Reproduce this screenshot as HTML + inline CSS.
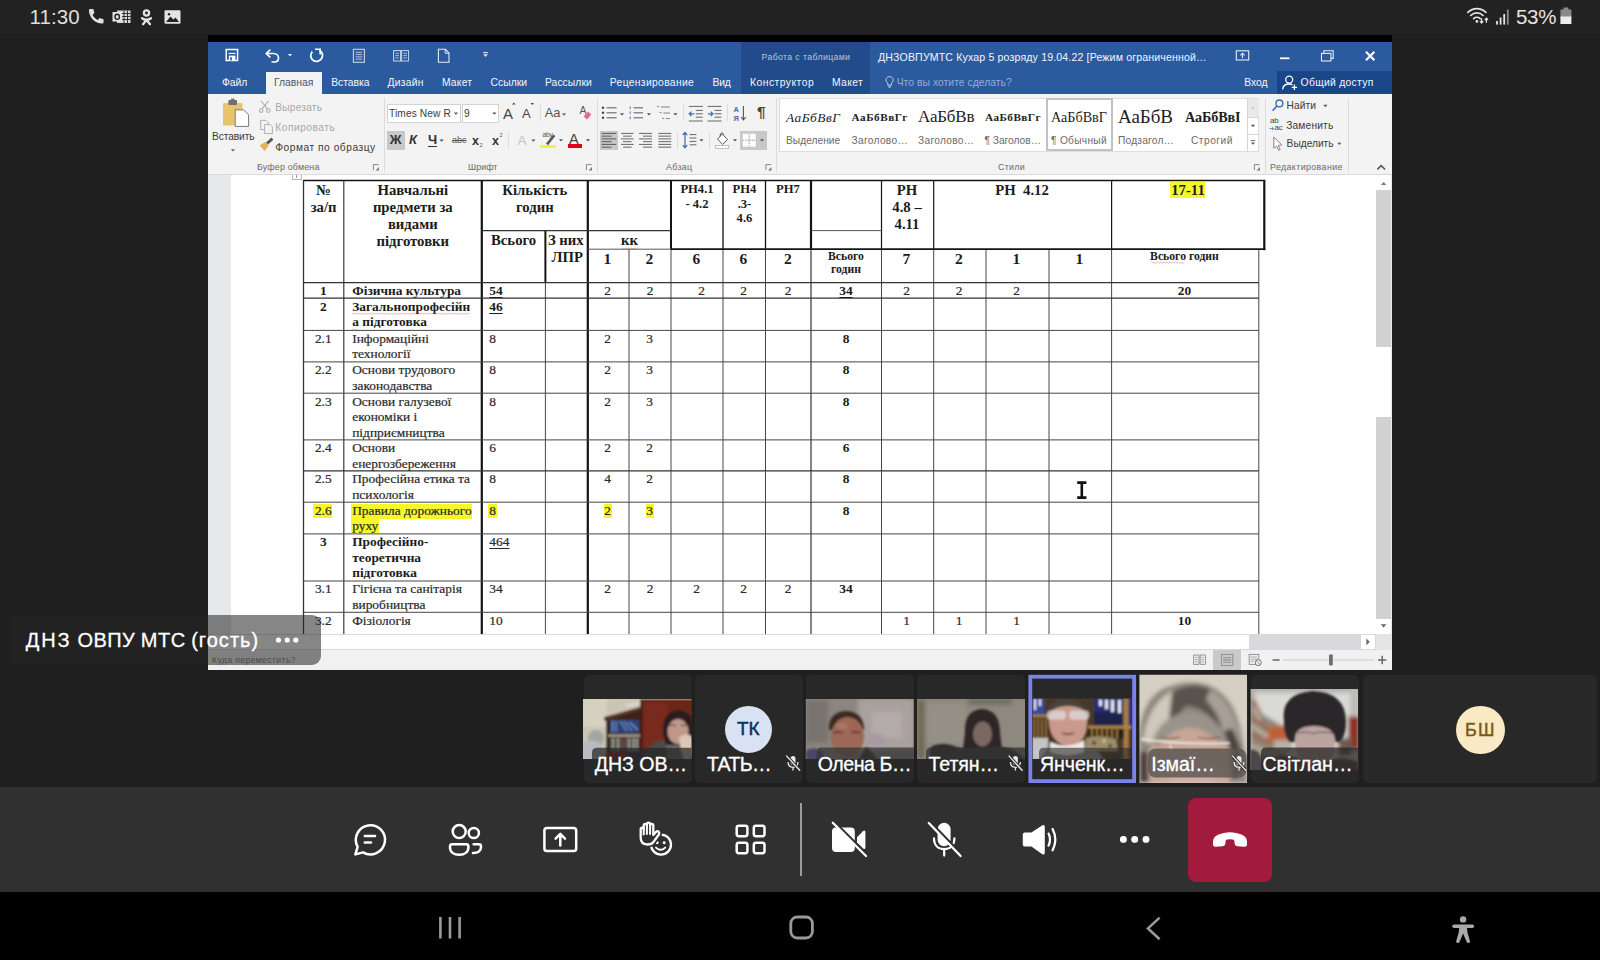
<!DOCTYPE html>
<html lang="uk"><head><meta charset="utf-8"><title>Teams meeting</title>
<style>
html,body{margin:0;padding:0;}
body{width:1600px;height:960px;overflow:hidden;background:#1f1f1f;position:relative;font-family:"Liberation Sans",sans-serif;color:#fff;}
.abs{position:absolute;}
svg{position:absolute;overflow:visible;}
.t{position:absolute;white-space:nowrap;line-height:1;}

</style></head>
<body>

<div class="abs" id="statusbar" style="left:0;top:0;width:1600px;height:34px;background:#222222;"></div>
<div class="t" style="left:29.6px;top:7px;font-size:20.5px;color:#dedede;letter-spacing:0.05px;">11:30</div>
<svg style="left:86px;top:7px;" width="100" height="22" viewBox="0 0 100 22">
  <!-- phone -->
  <path transform="translate(0.4 -0.9) scale(1.1)" d="M3.6 2.6 L6.3 2.6 L7.3 6.2 L5.6 7.9 C6.6 10 8.2 11.6 10.3 12.6 L12 10.9 L15.6 11.9 L15.6 14.6 C15.6 15.3 15 15.9 14.3 15.9 C7.7 15.6 2.6 10.5 2.3 3.9 C2.3 3.2 2.9 2.6 3.6 2.6 Z" fill="#e0e0e0"/>
  <!-- outlook -->
  <rect x="31" y="3.5" width="13.5" height="12.5" fill="#d8d8d8"/>
  <path d="M35 6.5H44.5M35 9.5H44.5M35 12.5H44.5M38 3.5V16M41.5 3.5V16" stroke="#222" stroke-width="0.9"/>
  <rect x="26.5" y="5" width="9.5" height="9.5" fill="#e4e4e4"/>
  <ellipse cx="31.2" cy="9.8" rx="2.2" ry="2.6" fill="none" stroke="#222" stroke-width="1.4"/>
  <!-- ok -->
  <circle cx="60.5" cy="6" r="2.6" fill="none" stroke="#e4e4e4" stroke-width="2.3"/>
  <path d="M56 11.2 C58.8 13.2 62.2 13.2 65 11.2" fill="none" stroke="#e4e4e4" stroke-width="2.3" stroke-linecap="round"/>
  <path d="M60.5 13 L57 17.2 M60.5 13 L64 17.2" fill="none" stroke="#e4e4e4" stroke-width="2.3" stroke-linecap="round"/>
  <!-- image -->
  <rect x="78.5" y="3.2" width="16" height="13.6" rx="1.2" fill="#e4e4e4"/>
  <path d="M80 15 L84.5 9.6 L87.4 12.6 L89.6 10.6 L93 15 Z" fill="#222"/>
  <circle cx="83" cy="7.2" r="1.2" fill="#222"/>
</svg>
<svg style="left:1462px;top:4px;" width="120" height="26" viewBox="0 0 120 26">
  <!-- wifi -->
  <g transform="translate(-0.6 -1.2)"><g fill="none" stroke="#e4e4e4" stroke-width="1.7" stroke-linecap="round">
    <path d="M6.5 9.5 C11.5 4.5 19.5 4.5 24.5 9.5"/>
    <path d="M9.3 12.7 C12.8 9.3 18.2 9.3 21.7 12.7"/>
    <path d="M12.2 15.8 C14 14.2 17 14.2 18.8 15.8"/>
  </g>
  <circle cx="15.5" cy="18.6" r="1.4" fill="#e4e4e4"/>
  <path d="M20.2 15.5V20M18.6 18.4L20.2 20.2L21.8 18.4" stroke="#e4e4e4" stroke-width="1.2" fill="none"/>
  <path d="M25 20V15.6M23.4 17.2L25 15.4L26.6 17.2" stroke="#e4e4e4" stroke-width="1.2" fill="none"/></g>
  <!-- signal -->
  <g transform="translate(1.7 0)"><rect x="32.4" y="17" width="1.8" height="3.6" fill="#e4e4e4"/>
  <rect x="36" y="13.5" width="1.8" height="7.1" fill="#e4e4e4"/>
  <rect x="39.6" y="10" width="1.8" height="10.6" fill="#e4e4e4"/>
  <rect x="43.2" y="5.5" width="1.8" height="15.1" fill="#8a8a8a"/></g>
  <!-- battery -->
  <rect x="101.4" y="3.5" width="5" height="3" fill="#8a8a8a"/>
  <rect x="98.4" y="5.5" width="11" height="8" fill="#8a8a8a"/>
  <rect x="98.4" y="12.5" width="11" height="7.5" fill="#ededed"/>
</svg>
<div class="t" style="left:1516px;top:7px;font-size:20.5px;color:#e4e4e4;letter-spacing:-0.3px;">53%</div>
<div class="abs" style="left:208px;top:35px;width:1184.2px;height:7px;background:#000;"></div>
<div class="abs" style="left:208px;top:41.6px;width:1184.2px;height:52.6px;background:#2b5a9f;"></div>
<div class="abs" style="left:741px;top:41.6px;width:128.5px;height:52.6px;background:#224b8b;"></div>
<div class="abs" style="left:1277px;top:70.5px;width:115.2px;height:23.7px;background:#1b4589;"></div>
<div class="abs" style="left:266px;top:71.6px;width:56px;height:23px;background:#f3f3f3;"></div>
<div class="abs" style="left:208px;top:94px;width:1184.2px;height:80px;background:#f3f3f3;"></div>
<div class="abs" style="left:208px;top:173.5px;width:1184px;height:1px;background:#dadada;"></div>
<div class="abs" style="left:208px;top:174.5px;width:1184px;height:459.5px;background:#ffffff;"></div>
<div class="abs" style="left:208px;top:174.5px;width:23px;height:459.5px;background:#e6e8ea;"></div>
<svg style="left:208px;top:42px" width="1184" height="52" viewBox="208 42 1184 52">
<g fill="none" stroke="#ffffff" stroke-width="1.3">
<path d="M226.2 49.6H237.6V60.4H226.2Z" stroke="#ffffff" stroke-width="1.5" fill="#2b5a9f"/>
<rect x="228.8" y="55.6" width="6.6" height="4.8" fill="#ffffff" stroke="none"/>
<rect x="230.2" y="57.2" width="1.7" height="3.2" fill="#2b5a9f" stroke="none"/>
<path d="M228.4 53.4H235.6" stroke="#ffffff" stroke-width="1.1"/>
<path d="M266.3 53.5H273.5C276.6 53.5 278.5 55.6 278.5 58C278.5 60.3 276.8 62 274.2 62H271.6" stroke-width="1.7"/>
<path d="M270.3 49.6L266.3 53.5L270.3 57.4" stroke-width="1.7"/>
<path d="M319.3 50.2C322.5 51.6 323.5 55.6 321.6 58.6C319.6 61.6 315.6 62.2 313 60.2C310.3 58.1 310 54.2 312.3 51.6" stroke-width="1.8"/>
<path d="M315 49.2H320.2V54.4" stroke-width="1.6"/>
<rect x="353.4" y="49.3" width="11" height="13" stroke="#c9d4e8" stroke-width="1.1"/>
<path d="M355.6 52.3H362.2M355.6 54.6H362.2M355.6 56.9H362.2M355.6 59.2H362.2" stroke="#c9d4e8" stroke-width="0.9"/>
<rect x="393.6" y="50.6" width="7" height="10.4" stroke="#c9d4e8" stroke-width="1"/>
<rect x="401.6" y="50.6" width="7" height="10.4" stroke="#c9d4e8" stroke-width="1"/>
<path d="M395.3 53.3H399M395.3 55.6H399M395.3 57.9H399M403.3 53.3H407M403.3 55.6H407M403.3 57.9H407" stroke="#c9d4e8" stroke-width="0.8"/>
<path d="M438.4 49.3H445.4L449 53V62.3H438.4Z" stroke="#e6ebf5" stroke-width="1.1"/>
<path d="M445.2 49.5V53.2H448.8" stroke="#e6ebf5" stroke-width="1"/>
</g>
<path d="M287.8 54.0H292.2L290 56.400000000000006Z" fill="#dfe6f2"/>
<path d="M483.2 52.6H487.8" stroke="#e6ebf5" stroke-width="1.1"/>
<path d="M483.2 54.300000000000004H487.8L485.5 56.9Z" fill="#e6ebf5"/>
<g fill="none" stroke="#e6ebf5" stroke-width="1.1">
<rect x="1236.3" y="50.8" width="12.4" height="9.2"/>
<path d="M1242.5 58.2V53.4M1240.3 55.4L1242.5 53.2L1244.7 55.4"/>
<path d="M1280 58.3H1289.5" stroke-width="1.8" stroke="#fff"/>
<rect x="1321.5" y="53.4" width="9.4" height="7.6"/>
<path d="M1323.8 53.2V50.8H1333.2V58.4H1331"/>
<path d="M1366 51.7L1374.4 60.2M1374.4 51.7L1366 60.2" stroke-width="2.1" stroke="#fff"/>
<path d="M887.6 77.2C885.2 78.6 885.8 81.8 887.8 83.2V85.2H891.4V83.2C893.4 81.8 894 78.6 891.6 77.2C890.4 76.5 888.8 76.5 887.6 77.2Z" stroke="#c9d4e8" stroke-width="1"/>
<path d="M888 87H891.2" stroke="#c9d4e8" stroke-width="1"/>
<circle cx="1289.2" cy="79.6" r="3.5" stroke="#fff" stroke-width="1.3"/>
<path d="M1282.6 89.4C1283 85.6 1285.6 84 1289.2 84C1290.4 84 1291.5 84.2 1292.4 84.6" stroke="#fff" stroke-width="1.3"/>
<path d="M1294.4 84.6V90M1291.7 87.3H1297.1" stroke="#fff" stroke-width="1.3"/>
</g>
</svg>
<div class="t" style="left:761.50px;top:51.84px;font-size:8.7px;line-height:11.31px;color:#b8c6df;letter-spacing:0.399px;">Работа с таблицами</div>
<div class="t" style="left:878.00px;top:50.65px;font-size:10.6px;line-height:13.78px;color:#f2f5fa;letter-spacing:0.142px;">ДНЗОВПУМТС Кухар 5 розряду 19.04.22 [Режим ограниченной…</div>
<div class="t" style="left:222.00px;top:76.10px;font-size:10.35px;line-height:13.46px;color:#f4f6fb;letter-spacing:-0.036px;">Файл</div>
<div class="t" style="left:331.20px;top:76.10px;font-size:10.35px;line-height:13.46px;color:#f4f6fb;letter-spacing:-0.039px;">Вставка</div>
<div class="t" style="left:387.50px;top:76.10px;font-size:10.35px;line-height:13.46px;color:#f4f6fb;letter-spacing:0.235px;">Дизайн</div>
<div class="t" style="left:441.90px;top:76.10px;font-size:10.35px;line-height:13.46px;color:#f4f6fb;letter-spacing:0.221px;">Макет</div>
<div class="t" style="left:490.60px;top:76.10px;font-size:10.35px;line-height:13.46px;color:#f4f6fb;letter-spacing:-0.006px;">Ссылки</div>
<div class="t" style="left:545.00px;top:76.10px;font-size:10.35px;line-height:13.46px;color:#f4f6fb;letter-spacing:0.043px;">Рассылки</div>
<div class="t" style="left:609.80px;top:76.10px;font-size:10.35px;line-height:13.46px;color:#f4f6fb;letter-spacing:0.320px;">Рецензирование</div>
<div class="t" style="left:712.60px;top:76.10px;font-size:10.35px;line-height:13.46px;color:#f4f6fb;letter-spacing:-0.242px;">Вид</div>
<div class="t" style="left:750.00px;top:76.10px;font-size:10.35px;line-height:13.46px;color:#f4f6fb;letter-spacing:0.471px;">Конструктор</div>
<div class="t" style="left:832.00px;top:76.10px;font-size:10.35px;line-height:13.46px;color:#f4f6fb;letter-spacing:0.341px;">Макет</div>
<div class="t" style="left:274.00px;top:76.10px;font-size:10.35px;line-height:13.46px;color:#4a5568;">Главная</div>
<div class="t" style="left:896.70px;top:76.10px;font-size:10.35px;line-height:13.46px;color:#93acd6;letter-spacing:0.036px;">Что вы хотите сделать?</div>
<div class="t" style="left:1244.30px;top:76.10px;font-size:10.35px;line-height:13.46px;color:#f4f6fb;letter-spacing:-0.029px;">Вход</div>
<div class="t" style="left:1300.60px;top:76.10px;font-size:10.35px;line-height:13.46px;color:#f4f6fb;letter-spacing:0.288px;">Общий доступ</div>
<div class="abs" style="left:383.5px;top:98px;width:1px;height:75px;background:#dcdcdc;"></div>
<div class="abs" style="left:597px;top:98px;width:1px;height:75px;background:#dcdcdc;"></div>
<div class="abs" style="left:776.3px;top:98px;width:1px;height:75px;background:#dcdcdc;"></div>
<div class="abs" style="left:1264.8px;top:98px;width:1px;height:75px;background:#dcdcdc;"></div>
<div class="abs" style="left:1348px;top:98px;width:1px;height:75px;background:#dcdcdc;"></div>
<div class="abs" style="left:539.7px;top:104px;width:1px;height:17px;background:#dedede;"></div>
<div class="abs" style="left:682.8px;top:104px;width:1px;height:17px;background:#dedede;"></div>
<div class="abs" style="left:726.7px;top:104px;width:1px;height:17px;background:#dedede;"></div>
<div class="abs" style="left:508px;top:132px;width:1px;height:17px;background:#dedede;"></div>
<div class="abs" style="left:676.6px;top:132px;width:1px;height:17px;background:#dedede;"></div>
<div class="abs" style="left:708.5px;top:132px;width:1px;height:17px;background:#dedede;"></div>
<div class="t" style="left:212.00px;top:129.80px;font-size:10.2px;line-height:13.26px;color:#3b3b3b;letter-spacing:-0.092px;">Вставить</div>
<div class="t" style="left:275.30px;top:100.60px;font-size:10.2px;line-height:13.26px;color:#a8a8a8;letter-spacing:0.204px;">Вырезать</div>
<div class="t" style="left:275.30px;top:121.00px;font-size:10.2px;line-height:13.26px;color:#a8a8a8;letter-spacing:0.508px;">Копировать</div>
<div class="t" style="left:275.30px;top:140.80px;font-size:10.2px;line-height:13.26px;color:#3b3b3b;letter-spacing:0.532px;">Формат по образцу</div>
<div class="t" style="left:257.00px;top:162.02px;font-size:8.9px;line-height:11.57px;color:#6a6a6a;letter-spacing:0.185px;">Буфер обмена</div>
<div class="t" style="left:468.00px;top:162.02px;font-size:8.9px;line-height:11.57px;color:#6a6a6a;letter-spacing:0.044px;">Шрифт</div>
<div class="t" style="left:666.00px;top:162.02px;font-size:8.9px;line-height:11.57px;color:#6a6a6a;letter-spacing:0.327px;">Абзац</div>
<div class="t" style="left:998.00px;top:162.02px;font-size:8.9px;line-height:11.57px;color:#6a6a6a;letter-spacing:0.272px;">Стили</div>
<div class="t" style="left:1270.00px;top:162.02px;font-size:8.9px;line-height:11.57px;color:#6a6a6a;letter-spacing:0.371px;">Редактирование</div>
<div class="abs" style="left:386.5px;top:104px;width:74.5px;height:18.5px;background:#fff;border:1px solid #d4d4d4;box-sizing:border-box;"></div>
<div class="abs" style="left:461.5px;top:104px;width:37.5px;height:18.5px;background:#fff;border:1px solid #d4d4d4;box-sizing:border-box;"></div>
<div class="t" style="left:389.00px;top:107.20px;font-size:10.2px;line-height:13.26px;color:#3b3b3b;letter-spacing:0.107px;">Times New R</div>
<div class="t" style="left:464.00px;top:107.20px;font-size:10.2px;line-height:13.26px;color:#3b3b3b;">9</div>
<div class="abs" style="left:386.5px;top:130.5px;width:18.2px;height:19px;background:#c8c8c8;"></div>
<div class="abs" style="left:599.7px;top:131px;width:18.3px;height:18.6px;background:#c8c8c8;"></div>
<div class="abs" style="left:740px;top:131px;width:26.6px;height:18.6px;background:#c8c8c8;"></div>
<div class="t" style="left:389.73px;top:132.04px;font-size:13px;line-height:16.9px;color:#333;font-weight:bold;">Ж</div>
<div class="t" style="left:409.00px;top:132.04px;font-size:13px;line-height:16.9px;color:#333;font-weight:bold;font-style:italic;">К</div>
<div class="t" style="left:427.93px;top:132.04px;font-size:13px;line-height:16.9px;color:#333;font-weight:bold;text-decoration:underline;text-decoration-thickness:1.3px;text-underline-offset:1.5px;">Ч</div>
<div class="t" style="left:452.00px;top:135.35px;font-size:9px;line-height:11.7px;color:#555;text-decoration:line-through;">abc</div>
<div class="t" style="left:472.00px;top:132.96px;font-size:12.5px;line-height:16.25px;color:#333;font-weight:bold;">x</div>
<div class="t" style="left:479.60px;top:141.95px;font-size:5.5px;line-height:7.15px;color:#555;">2</div>
<div class="t" style="left:492.00px;top:132.96px;font-size:12.5px;line-height:16.25px;color:#333;font-weight:bold;">x</div>
<div class="t" style="left:499.60px;top:131.95px;font-size:5.5px;line-height:7.15px;color:#555;">2</div>
<div class="t" style="left:503.00px;top:103.59px;font-size:15px;line-height:19.5px;color:#444;">A</div>
<div class="t" style="left:522.00px;top:105.64px;font-size:13px;line-height:16.9px;color:#444;">A</div>
<div class="t" style="left:544.80px;top:105.17px;font-size:12.8px;line-height:16.64px;color:#555;letter-spacing:-0.079px;">Aa</div>
<div class="t" style="left:517.50px;top:132.13px;font-size:13.5px;line-height:17.55px;color:#c4c4c4;">A</div>
<div class="t" style="left:569.00px;top:130.30px;font-size:14.5px;line-height:18.85px;color:#444;">A</div>
<div class="t" style="left:542.50px;top:131.33px;font-size:6.8px;line-height:8.84px;color:#555;letter-spacing:-0.321px;">aby</div>
<div class="abs" style="left:539.8px;top:144.6px;width:16.2px;height:3px;background:#f5f13a;"></div>
<div class="abs" style="left:567.6px;top:144.4px;width:14.8px;height:3.2px;background:#e2001a;"></div>
<div class="t" style="left:757.00px;top:102.07px;font-size:15.5px;line-height:20.15px;color:#444;font-weight:bold;">¶</div>
<div class="abs" style="left:779.4px;top:98px;width:480px;height:54.2px;background:#fff;border:1px solid #dedede;box-sizing:border-box;"></div>
<div class="abs" style="left:1247px;top:98.5px;width:12px;height:18.5px;background:#e9e9e9;"></div>
<div class="abs" style="left:1247px;top:117px;width:12px;height:0.8px;background:#d4d4d4;"></div>
<div class="abs" style="left:1247px;top:134.4px;width:12px;height:0.8px;background:#d4d4d4;"></div>
<div class="abs" style="left:1246.5px;top:98.5px;width:0.8px;height:53.2px;background:#d4d4d4;"></div>
<div class="abs" style="left:1046.4px;top:98.4px;width:66.2px;height:52.2px;background:#fff;border:2.8px solid #c2c2c2;box-sizing:border-box;"></div>
<div class="t" style="left:786.00px;top:108.79px;font-size:13.4px;line-height:17.42px;color:#1e1e1e;font-family:'Liberation Serif',serif;font-style:italic;letter-spacing:0.507px;">АаБбВвГ</div>
<div class="t" style="left:786.00px;top:134.00px;font-size:10.2px;line-height:13.26px;color:#6a6a6a;letter-spacing:0.028px;">Выделение</div>
<div class="t" style="left:851.60px;top:110.44px;font-size:11.2px;line-height:14.56px;color:#1e1e1e;font-family:'Liberation Serif',serif;font-weight:bold;letter-spacing:0.515px;">АаБбВвГг</div>
<div class="t" style="left:851.60px;top:134.00px;font-size:10.2px;line-height:13.26px;color:#6a6a6a;letter-spacing:0.300px;">Заголово…</div>
<div class="t" style="left:918.00px;top:106.02px;font-size:17px;line-height:22.1px;color:#1e1e1e;font-family:'Liberation Serif',serif;letter-spacing:-0.163px;">АаБбВв</div>
<div class="t" style="left:918.00px;top:134.00px;font-size:10.2px;line-height:13.26px;color:#6a6a6a;letter-spacing:0.300px;">Заголово…</div>
<div class="t" style="left:985.00px;top:110.44px;font-size:11.2px;line-height:14.56px;color:#1e1e1e;font-family:'Liberation Serif',serif;font-weight:bold;letter-spacing:0.465px;">АаБбВвГг</div>
<div class="t" style="left:984.40px;top:134.00px;font-size:10.2px;line-height:13.26px;color:#6a6a6a;letter-spacing:0.015px;">¶ Заголов…</div>
<div class="t" style="left:1051.00px;top:108.06px;font-size:14.2px;line-height:18.46px;color:#1e1e1e;font-family:'Liberation Serif',serif;letter-spacing:-0.019px;">АаБбВвГ</div>
<div class="t" style="left:1051.00px;top:134.00px;font-size:10.2px;line-height:13.26px;color:#6a6a6a;letter-spacing:0.289px;">¶ Обычный</div>
<div class="t" style="left:1118.00px;top:104.51px;font-size:19px;line-height:24.7px;color:#1e1e1e;font-family:'Liberation Serif',serif;letter-spacing:-0.031px;">АаБбВ</div>
<div class="t" style="left:1118.00px;top:134.00px;font-size:10.2px;line-height:13.26px;color:#6a6a6a;letter-spacing:0.202px;">Подзагол…</div>
<div class="t" style="left:1185.00px;top:108.06px;font-size:14.2px;line-height:18.46px;color:#1e1e1e;font-family:'Liberation Serif',serif;font-weight:bold;letter-spacing:-0.118px;">АаБбВвI</div>
<div class="t" style="left:1191.00px;top:134.00px;font-size:10.2px;line-height:13.26px;color:#6a6a6a;letter-spacing:0.500px;">Строгий</div>
<div class="t" style="left:1286.60px;top:99.40px;font-size:10.2px;line-height:13.26px;color:#3b3b3b;letter-spacing:0.059px;">Найти</div>
<div class="t" style="left:1286.20px;top:118.60px;font-size:10.2px;line-height:13.26px;color:#3b3b3b;letter-spacing:0.183px;">Заменить</div>
<div class="t" style="left:1286.60px;top:137.20px;font-size:10.2px;line-height:13.26px;color:#3b3b3b;letter-spacing:-0.007px;">Выделить</div>
<div class="t" style="left:1270.00px;top:116.38px;font-size:8px;line-height:10.4px;color:#444;letter-spacing:-0.149px;">ab</div>
<div class="t" style="left:1274.40px;top:123.18px;font-size:8px;line-height:10.4px;color:#444;letter-spacing:-0.125px;">ac</div>
<svg style="left:208px;top:94px" width="1184" height="80" viewBox="208 94 1184 80">
<rect x="223" y="103" width="19.5" height="22.5" rx="1" fill="#e9c46e"/>
<rect x="228.4" y="100" width="8.6" height="5" rx="1" fill="#6f6f6f"/><rect x="231" y="98.6" width="3.4" height="2.4" fill="#6f6f6f"/>
<path d="M235.2 109.8H243.6L248.6 114.8V126.4H235.2Z" fill="#fff" stroke="#7a7a7a" stroke-width="1"/>
<path d="M230.8 149.20000000000002H235.2L233 151.6Z" fill="#666"/>
<g fill="none" stroke="#b0b0b0" stroke-width="1.1"><path d="M261 100.8L267.8 109.2M268.6 100.8L261.8 109.2"/><circle cx="261.2" cy="110.6" r="1.8"/><circle cx="268.4" cy="110.6" r="1.8"/></g>
<g fill="#f3f3f3" stroke="#b0b0b0" stroke-width="1"><path d="M260.6 120.4H266L268.4 122.8V129.6H260.6Z"/><path d="M264.6 124.4H270L272.4 126.8V133.6H264.6Z"/></g>
<path d="M266 142.4L271.4 137.6L273.4 139.8L268 144.6Z" fill="#555"/><path d="M259.6 145.6L265.4 141.8L268.8 145.4L264.6 151Z" fill="#e2b455"/>
<path d="M373.4 170V164.6H378.6" fill="none" stroke="#7a7a7a" stroke-width="0.9"/><path d="M379 170.4H375.6L379 167Z" fill="#7a7a7a"/>
<path d="M586.4 170V164.6H591.6" fill="none" stroke="#7a7a7a" stroke-width="0.9"/><path d="M592 170.4H588.6L592 167Z" fill="#7a7a7a"/>
<path d="M765.9 170V164.6H771.1" fill="none" stroke="#7a7a7a" stroke-width="0.9"/><path d="M771.5 170.4H768.1L771.5 167Z" fill="#7a7a7a"/>
<path d="M1254.4 170V164.6H1259.6" fill="none" stroke="#7a7a7a" stroke-width="0.9"/><path d="M1260 170.4H1256.6L1260 167Z" fill="#7a7a7a"/>
<path d="M453.9 112.44999999999999H458.1L456 114.75Z" fill="#555"/>
<path d="M492.29999999999995 112.44999999999999H496.5L494.4 114.75Z" fill="#555"/>
<path d="M561.9 113.44999999999999H566.1L564 115.75Z" fill="#555"/>
<path d="M439.5 139.45H443.70000000000005L441.6 141.75Z" fill="#555"/>
<path d="M531.3 139.45H535.5L533.4 141.75Z" fill="#555"/>
<path d="M558.9 139.25H563.1L561 141.55Z" fill="#555"/>
<path d="M585.9 139.25H590.1L588 141.55Z" fill="#555"/>
<path d="M619.9 113.25H624.1L622 115.55000000000001Z" fill="#555"/>
<path d="M646.9 113.25H651.1L649 115.55000000000001Z" fill="#555"/>
<path d="M673.3 113.25H677.5L675.4 115.55000000000001Z" fill="#555"/>
<path d="M699.3 139.25H703.5L701.4 141.55Z" fill="#555"/>
<path d="M732.9 139.25H737.1L735 141.55Z" fill="#555"/>
<path d="M759.9 139.25H764.1L762 141.55Z" fill="#555"/>
<path d="M1323.3000000000002 104.85H1327.5L1325.4 107.15Z" fill="#555"/>
<path d="M1337.3000000000002 142.65H1341.5L1339.4 144.95000000000002Z" fill="#555"/>
<path d="M1250.9 124.85H1255.1L1253 127.15Z" fill="#555"/>
<path d="M1250.8 140.6H1255.2" stroke="#555" stroke-width="0.9"/><path d="M1250.9 142.45H1255.1L1253 144.75Z" fill="#555"/>
<path d="M1250.9 108.75H1255.1L1253 106.44999999999999Z" fill="#c4c4c4"/>
<path d="M512 104.6l1.8 -2l1.8 2z" fill="#444"/><path d="M530.6 103l1.7 2l1.7 -2z" fill="#444"/>
<text x="579.4" y="114" font-size="10.5" fill="#555" font-family="Liberation Sans,sans-serif">A</text><path d="M583.6 116.6L588 111.6L591.4 114.6L587 119.6Z" fill="#e76a8a"/>
<path d="M546 143.6L553.4 134.4L555.4 136L548 145.2Z" fill="#555"/>
<circle cx="603" cy="107.8" r="1.25" fill="#3d4b6b"/><path d="M606.6 107.8H616.6" stroke="#666" stroke-width="1.1"/>
<path d="M630.2 106.39999999999999V109.2" stroke="#3f6bb5" stroke-width="0.9"/><path d="M633.6 107.8H643" stroke="#666" stroke-width="1.1"/>
<circle cx="603" cy="112.8" r="1.25" fill="#3d4b6b"/><path d="M606.6 112.8H616.6" stroke="#666" stroke-width="1.1"/>
<path d="M630.2 111.39999999999999V114.2" stroke="#3f6bb5" stroke-width="0.9"/><path d="M633.6 112.8H643" stroke="#666" stroke-width="1.1"/>
<circle cx="603" cy="117.8" r="1.25" fill="#3d4b6b"/><path d="M606.6 117.8H616.6" stroke="#666" stroke-width="1.1"/>
<path d="M630.2 116.39999999999999V119.2" stroke="#3f6bb5" stroke-width="0.9"/><path d="M633.6 117.8H643" stroke="#666" stroke-width="1.1"/>
<g stroke="#777" stroke-width="0.9"><path d="M657 106.6H659M660.8 107H670M659.6 112.6H661.6M663.4 113H670M662.2 118.4H664.2M665.8 118.6H670"/></g>
<g stroke="#666" stroke-width="1"><path d="M688.8 106.4H702.8M695.8 110.4H702.8M695.8 113.8H702.8M695.8 117.2H702.8M688.8 121H702.8"/></g>
<path d="M694.1999999999999 113.8H689.4M691.4 111.6L689.1999999999999 113.8L691.4 116" stroke="#3f6bb5" stroke-width="1.2" fill="none"/>
<g stroke="#666" stroke-width="1"><path d="M707.5 106.4H721.5M714.5 110.4H721.5M714.5 113.8H721.5M714.5 117.2H721.5M707.5 121H721.5"/></g>
<path d="M707.9 113.8H712.7M710.7 111.6L712.9 113.8L710.7 116" stroke="#3f6bb5" stroke-width="1.2" fill="none"/>
<text x="733.6" y="112.2" font-size="7.4" font-weight="bold" fill="#3f6bb5" font-family="Liberation Sans,sans-serif">А</text><text x="733.6" y="120.6" font-size="7.4" font-weight="bold" fill="#7d4aa0" font-family="Liberation Sans,sans-serif">Я</text>
<path d="M743.4 106V119.6M741 117L743.4 119.8L745.8 117" stroke="#555" stroke-width="1.1" fill="none"/>
<path d="M601.6 133.4H616.2M601.6 136.15H611.6M601.6 138.9H616.2M601.6 141.65H611.6M601.6 144.4H616.2M601.6 147.15H611.6" stroke="#5a5a5a" stroke-width="1"/>
<path d="M621 133.4H633.6M623 136.15H631.6M621 138.9H633.6M623 141.65H631.6M621 144.4H633.6M623 147.15H631.6" stroke="#666" stroke-width="1"/>
<path d="M639 133.4H652M643 136.15H652M639 138.9H652M643 141.65H652M639 144.4H652M643 147.15H652" stroke="#666" stroke-width="1"/>
<path d="M658.4 133.4H671.1999999999999M658.4 136.15H671.1999999999999M658.4 138.9H671.1999999999999M658.4 141.65H671.1999999999999M658.4 144.4H671.1999999999999M658.4 147.15H671.1999999999999" stroke="#666" stroke-width="1"/>
<path d="M685 132.6V147.6M682.8 135L685 132.4L687.2 135M682.8 145.2L685 147.8L687.2 145.2" stroke="#3f6bb5" stroke-width="1.2" fill="none"/><path d="M689.6 134.6H696.4M689.6 138H696.4M689.6 141.4H696.4M689.6 144.8H696.4" stroke="#666" stroke-width="1"/>
<path d="M717.6 139.2L722.2 134L727.6 139.6L722.6 144.4Z" fill="#fff" stroke="#555" stroke-width="1"/><path d="M720.2 136.4C719.6 133 722.8 131.6 723.8 134.4" fill="none" stroke="#555" stroke-width="1"/><rect x="715.4" y="145.6" width="13.4" height="3" fill="#fff" stroke="#aaa" stroke-width="0.7"/>
<rect x="743" y="134" width="12.4" height="12.4" fill="#fff" stroke="#fff" stroke-width="0.5"/><path d="M749.2 134V146.4M743 140.2H755.4" stroke="#8a8a8a" stroke-width="0.9" stroke-dasharray="1.2 1"/>
<circle cx="1279.4" cy="103.4" r="3.4" fill="none" stroke="#3f6bb5" stroke-width="1.4"/><path d="M1277 106L1272.6 110.6" stroke="#3f6bb5" stroke-width="1.6"/>
<path d="M1273.8 137V148.4L1276.6 146L1278.6 150.4L1280.2 149.6L1278.2 145.4L1281.8 145Z" fill="#fff" stroke="#777" stroke-width="0.9"/>
<path d="M1269.6 128.6H1273.4M1272 127.2L1273.6 128.6L1272 130" stroke="#3f6bb5" stroke-width="0.8" fill="none"/>
<path d="M1377.4 169.4L1381.2 165.6L1385 169.4" fill="none" stroke="#555" stroke-width="1.5"/>
</svg>
<div class="abs" id="doc" style="left:0;top:0;width:1600px;height:634px;overflow:hidden;">
<div class="abs" style="left:1170px;top:182.4px;width:35.4px;height:15.2px;background:#f6f629;"></div>
<div class="abs" style="left:313px;top:503.5px;width:19px;height:14.5px;background:#f6f629;"></div>
<div class="abs" style="left:351px;top:503.5px;width:120.5px;height:15px;background:#f6f629;"></div>
<div class="abs" style="left:351px;top:518px;width:28px;height:15px;background:#f6f629;"></div>
<div class="abs" style="left:488px;top:503.5px;width:8.5px;height:14.5px;background:#f6f629;"></div>
<div class="abs" style="left:603.5px;top:503.5px;width:8px;height:14.5px;background:#f6f629;"></div>
<div class="abs" style="left:645.5px;top:503.5px;width:8px;height:14.5px;background:#f6f629;"></div>
<svg style="left:0;top:0" width="1600" height="640" viewBox="0 0 1600 640">
<line x1="303.0" y1="180.6" x2="1265.3" y2="180.6" stroke="#141414" stroke-width="1.5"/>
<line x1="303.5" y1="180.6" x2="303.5" y2="634" stroke="#333" stroke-width="1.3"/>
<line x1="343.8" y1="180.6" x2="343.8" y2="634" stroke="#3a3a3a" stroke-width="1.2"/>
<line x1="481.8" y1="180.6" x2="481.8" y2="634" stroke="#141414" stroke-width="2.2"/>
<line x1="545.4" y1="230.6" x2="545.4" y2="282.7" stroke="#141414" stroke-width="2"/>
<line x1="545.4" y1="282.7" x2="545.4" y2="634" stroke="#464646" stroke-width="1"/>
<line x1="587.8" y1="180.6" x2="587.8" y2="634" stroke="#141414" stroke-width="2.2"/>
<line x1="629" y1="249.2" x2="629" y2="634" stroke="#464646" stroke-width="1"/>
<line x1="671" y1="180.6" x2="671" y2="249.2" stroke="#141414" stroke-width="2"/>
<line x1="671" y1="249.2" x2="671" y2="634" stroke="#464646" stroke-width="1"/>
<line x1="723" y1="180.6" x2="723" y2="249.2" stroke="#141414" stroke-width="1.3"/>
<line x1="723" y1="249.2" x2="723" y2="634" stroke="#464646" stroke-width="1"/>
<line x1="765.5" y1="180.6" x2="765.5" y2="249.2" stroke="#141414" stroke-width="1.3"/>
<line x1="765.5" y1="249.2" x2="765.5" y2="634" stroke="#464646" stroke-width="1"/>
<line x1="811" y1="180.6" x2="811" y2="249.2" stroke="#141414" stroke-width="2.2"/>
<line x1="811" y1="249.2" x2="811" y2="634" stroke="#333" stroke-width="1.2"/>
<line x1="881.5" y1="180.6" x2="881.5" y2="249.2" stroke="#141414" stroke-width="1.2"/>
<line x1="881.5" y1="249.2" x2="881.5" y2="634" stroke="#464646" stroke-width="1"/>
<line x1="933.7" y1="180.6" x2="933.7" y2="249.2" stroke="#141414" stroke-width="1.2"/>
<line x1="933.7" y1="249.2" x2="933.7" y2="634" stroke="#464646" stroke-width="1"/>
<line x1="1111.6" y1="180.6" x2="1111.6" y2="249.2" stroke="#141414" stroke-width="1.2"/>
<line x1="1111.6" y1="249.2" x2="1111.6" y2="634" stroke="#464646" stroke-width="1"/>
<line x1="986" y1="249.2" x2="986" y2="634" stroke="#464646" stroke-width="1"/>
<line x1="1049" y1="249.2" x2="1049" y2="634" stroke="#464646" stroke-width="1"/>
<line x1="1264.3" y1="180.6" x2="1264.3" y2="250.2" stroke="#141414" stroke-width="2.2"/>
<line x1="1258.8" y1="249.2" x2="1258.8" y2="634" stroke="#464646" stroke-width="1"/>
<line x1="481.8" y1="230.6" x2="671" y2="230.6" stroke="#333" stroke-width="1.2"/>
<line x1="811" y1="230.6" x2="881.5" y2="230.6" stroke="#555" stroke-width="1"/>
<line x1="587.8" y1="249.2" x2="671" y2="249.2" stroke="#555" stroke-width="1"/>
<line x1="671" y1="249.2" x2="1265.3" y2="249.2" stroke="#141414" stroke-width="1.8"/>
<line x1="303.5" y1="282.7" x2="1258.8" y2="282.7" stroke="#333" stroke-width="1.2"/>
<line x1="303.5" y1="298.2" x2="1258.8" y2="298.2" stroke="#333" stroke-width="1.2"/>
<line x1="303.5" y1="330.4" x2="1258.8" y2="330.4" stroke="#464646" stroke-width="1"/>
<line x1="303.5" y1="361.9" x2="1258.8" y2="361.9" stroke="#464646" stroke-width="1"/>
<line x1="303.5" y1="393.2" x2="1258.8" y2="393.2" stroke="#464646" stroke-width="1"/>
<line x1="303.5" y1="439.9" x2="1258.8" y2="439.9" stroke="#464646" stroke-width="1"/>
<line x1="303.5" y1="470.9" x2="1258.8" y2="470.9" stroke="#333" stroke-width="1.2"/>
<line x1="303.5" y1="502.2" x2="1258.8" y2="502.2" stroke="#464646" stroke-width="1"/>
<line x1="303.5" y1="533.9" x2="1258.8" y2="533.9" stroke="#464646" stroke-width="1"/>
<line x1="303.5" y1="581" x2="1258.8" y2="581" stroke="#464646" stroke-width="1"/>
<line x1="303.5" y1="612.3" x2="1258.8" y2="612.3" stroke="#464646" stroke-width="1"/>
</svg>
<div class="t" style="left:316.24px;top:180.53px;font-size:14.75px;line-height:19.18px;color:#1c1c1c;font-family:'Liberation Serif',serif;font-weight:bold;">№</div>
<div class="t" style="left:310.70px;top:197.53px;font-size:14.75px;line-height:19.18px;color:#1c1c1c;font-family:'Liberation Serif',serif;font-weight:bold;">за/п</div>
<div class="t" style="left:377.43px;top:180.53px;font-size:14.75px;line-height:19.18px;color:#1c1c1c;font-family:'Liberation Serif',serif;font-weight:bold;">Навчальні</div>
<div class="t" style="left:372.88px;top:197.53px;font-size:14.75px;line-height:19.18px;color:#1c1c1c;font-family:'Liberation Serif',serif;font-weight:bold;">предмети за</div>
<div class="t" style="left:387.88px;top:214.53px;font-size:14.75px;line-height:19.18px;color:#1c1c1c;font-family:'Liberation Serif',serif;font-weight:bold;">видами</div>
<div class="t" style="left:376.50px;top:231.53px;font-size:14.75px;line-height:19.18px;color:#1c1c1c;font-family:'Liberation Serif',serif;font-weight:bold;">підготовки</div>
<div class="t" style="left:502.27px;top:180.53px;font-size:14.75px;line-height:19.18px;color:#1c1c1c;font-family:'Liberation Serif',serif;font-weight:bold;">Кількість</div>
<div class="t" style="left:515.93px;top:197.53px;font-size:14.75px;line-height:19.18px;color:#1c1c1c;font-family:'Liberation Serif',serif;font-weight:bold;">годин</div>
<div class="t" style="left:490.97px;top:231.33px;font-size:14.75px;line-height:19.18px;color:#1c1c1c;font-family:'Liberation Serif',serif;font-weight:bold;">Всього</div>
<div class="t" style="left:548.00px;top:231.33px;font-size:14.75px;line-height:19.18px;color:#1c1c1c;font-family:'Liberation Serif',serif;font-weight:bold;letter-spacing:-0.069px;">З них</div>
<div class="t" style="left:551.50px;top:248.33px;font-size:14.75px;line-height:19.18px;color:#1c1c1c;font-family:'Liberation Serif',serif;font-weight:bold;">ЛПР</div>
<div class="t" style="left:620.90px;top:231.43px;font-size:14.75px;line-height:19.18px;color:#1c1c1c;font-family:'Liberation Serif',serif;font-weight:bold;">кк</div>
<svg style="left:621.5px;top:246.8px" width="17" height="4" viewBox="0 0 17 4"><path d="M0 1.6 q0.75 -1.5 1.5 0 q0.75 1.5 1.5 0 q0.75 -1.5 1.5 0 q0.75 1.5 1.5 0 q0.75 -1.5 1.5 0 q0.75 1.5 1.5 0 q0.75 -1.5 1.5 0 q0.75 1.5 1.5 0 q0.75 -1.5 1.5 0 q0.75 1.5 1.5 0" fill="none" stroke="#cc4a44" stroke-opacity="0.7" stroke-width="0.6"/></svg>
<div class="t" style="left:603.62px;top:249.19px;font-size:15.5px;line-height:20.15px;color:#1c1c1c;font-family:'Liberation Serif',serif;font-weight:bold;">1</div>
<div class="t" style="left:645.62px;top:249.19px;font-size:15.5px;line-height:20.15px;color:#1c1c1c;font-family:'Liberation Serif',serif;font-weight:bold;">2</div>
<div class="t" style="left:692.62px;top:249.19px;font-size:15.5px;line-height:20.15px;color:#1c1c1c;font-family:'Liberation Serif',serif;font-weight:bold;">6</div>
<div class="t" style="left:739.62px;top:249.19px;font-size:15.5px;line-height:20.15px;color:#1c1c1c;font-family:'Liberation Serif',serif;font-weight:bold;">6</div>
<div class="t" style="left:784.12px;top:249.19px;font-size:15.5px;line-height:20.15px;color:#1c1c1c;font-family:'Liberation Serif',serif;font-weight:bold;">2</div>
<div class="t" style="left:902.62px;top:249.19px;font-size:15.5px;line-height:20.15px;color:#1c1c1c;font-family:'Liberation Serif',serif;font-weight:bold;">7</div>
<div class="t" style="left:955.12px;top:249.19px;font-size:15.5px;line-height:20.15px;color:#1c1c1c;font-family:'Liberation Serif',serif;font-weight:bold;">2</div>
<div class="t" style="left:1012.62px;top:249.19px;font-size:15.5px;line-height:20.15px;color:#1c1c1c;font-family:'Liberation Serif',serif;font-weight:bold;">1</div>
<div class="t" style="left:1075.62px;top:249.19px;font-size:15.5px;line-height:20.15px;color:#1c1c1c;font-family:'Liberation Serif',serif;font-weight:bold;">1</div>
<div class="t" style="left:680.38px;top:181.06px;font-size:12.6px;line-height:16.38px;color:#1c1c1c;font-family:'Liberation Serif',serif;font-weight:bold;">РН4.1</div>
<div class="t" style="left:685.45px;top:195.56px;font-size:12.6px;line-height:16.38px;color:#1c1c1c;font-family:'Liberation Serif',serif;font-weight:bold;">- 4.2</div>
<div class="t" style="left:732.60px;top:181.06px;font-size:12.6px;line-height:16.38px;color:#1c1c1c;font-family:'Liberation Serif',serif;font-weight:bold;">РН4</div>
<div class="t" style="left:737.68px;top:195.56px;font-size:12.6px;line-height:16.38px;color:#1c1c1c;font-family:'Liberation Serif',serif;font-weight:bold;">.3-</div>
<div class="t" style="left:736.62px;top:210.06px;font-size:12.6px;line-height:16.38px;color:#1c1c1c;font-family:'Liberation Serif',serif;font-weight:bold;">4.6</div>
<div class="t" style="left:776.10px;top:181.06px;font-size:12.6px;line-height:16.38px;color:#1c1c1c;font-family:'Liberation Serif',serif;font-weight:bold;">РН7</div>
<div class="t" style="left:896.76px;top:180.53px;font-size:14.75px;line-height:19.18px;color:#1c1c1c;font-family:'Liberation Serif',serif;font-weight:bold;">РН</div>
<div class="t" style="left:892.25px;top:197.53px;font-size:14.75px;line-height:19.18px;color:#1c1c1c;font-family:'Liberation Serif',serif;font-weight:bold;">4.8 –</div>
<div class="t" style="left:894.50px;top:214.53px;font-size:14.75px;line-height:19.18px;color:#1c1c1c;font-family:'Liberation Serif',serif;font-weight:bold;">4.11</div>
<div class="t" style="left:995.16px;top:180.53px;font-size:14.75px;line-height:19.18px;color:#1c1c1c;font-family:'Liberation Serif',serif;font-weight:bold;white-space:pre;">РН  4.12</div>
<div class="t" style="left:1171.20px;top:180.53px;font-size:14.75px;line-height:19.18px;color:#1c1c1c;font-family:'Liberation Serif',serif;font-weight:bold;">17-11</div>
<div class="t" style="left:828.05px;top:248.75px;font-size:11.7px;line-height:15.21px;color:#1c1c1c;font-family:'Liberation Serif',serif;font-weight:bold;">Всього</div>
<div class="t" style="left:831.03px;top:262.25px;font-size:11.7px;line-height:15.21px;color:#1c1c1c;font-family:'Liberation Serif',serif;font-weight:bold;">годин</div>
<div class="t" style="left:1150.12px;top:248.75px;font-size:11.7px;line-height:15.21px;color:#1c1c1c;font-family:'Liberation Serif',serif;font-weight:bold;">Всього годин</div>
<svg style="left:1150.5px;top:261.0px" width="36" height="4" viewBox="0 0 36 4"><path d="M0 1.6 q0.75 -1.5 1.5 0 q0.75 1.5 1.5 0 q0.75 -1.5 1.5 0 q0.75 1.5 1.5 0 q0.75 -1.5 1.5 0 q0.75 1.5 1.5 0 q0.75 -1.5 1.5 0 q0.75 1.5 1.5 0 q0.75 -1.5 1.5 0 q0.75 1.5 1.5 0 q0.75 -1.5 1.5 0 q0.75 1.5 1.5 0 q0.75 -1.5 1.5 0 q0.75 1.5 1.5 0 q0.75 -1.5 1.5 0 q0.75 1.5 1.5 0 q0.75 -1.5 1.5 0 q0.75 1.5 1.5 0 q0.75 -1.5 1.5 0 q0.75 1.5 1.5 0 q0.75 -1.5 1.5 0 q0.75 1.5 1.5 0" fill="none" stroke="#cc4a44" stroke-opacity="0.7" stroke-width="0.6"/></svg>
<div class="t" style="left:319.95px;top:282.07px;font-size:13.4px;line-height:17.42px;color:#1c1c1c;font-family:'Liberation Serif',serif;font-weight:bold;">1</div>
<div class="t" style="left:352.20px;top:282.07px;font-size:13.4px;line-height:17.42px;color:#1c1c1c;font-family:'Liberation Serif',serif;font-weight:bold;">Фізична культура</div>
<div class="t" style="left:489.30px;top:282.07px;font-size:13.4px;line-height:17.42px;color:#1c1c1c;font-family:'Liberation Serif',serif;font-weight:bold;text-decoration:underline;text-decoration-thickness:1px;text-underline-offset:1.5px;">54</div>
<div class="t" style="left:604.15px;top:282.07px;font-size:13.4px;line-height:17.42px;color:#2a2a2a;font-family:'Liberation Serif',serif;-webkit-text-stroke:0.22px #2a2a2a;">2</div>
<div class="t" style="left:646.65px;top:282.07px;font-size:13.4px;line-height:17.42px;color:#2a2a2a;font-family:'Liberation Serif',serif;-webkit-text-stroke:0.22px #2a2a2a;">2</div>
<div class="t" style="left:698.15px;top:282.07px;font-size:13.4px;line-height:17.42px;color:#2a2a2a;font-family:'Liberation Serif',serif;-webkit-text-stroke:0.22px #2a2a2a;">2</div>
<div class="t" style="left:740.15px;top:282.07px;font-size:13.4px;line-height:17.42px;color:#2a2a2a;font-family:'Liberation Serif',serif;-webkit-text-stroke:0.22px #2a2a2a;">2</div>
<div class="t" style="left:784.65px;top:282.07px;font-size:13.4px;line-height:17.42px;color:#2a2a2a;font-family:'Liberation Serif',serif;-webkit-text-stroke:0.22px #2a2a2a;">2</div>
<div class="t" style="left:903.15px;top:282.07px;font-size:13.4px;line-height:17.42px;color:#2a2a2a;font-family:'Liberation Serif',serif;-webkit-text-stroke:0.22px #2a2a2a;">2</div>
<div class="t" style="left:955.65px;top:282.07px;font-size:13.4px;line-height:17.42px;color:#2a2a2a;font-family:'Liberation Serif',serif;-webkit-text-stroke:0.22px #2a2a2a;">2</div>
<div class="t" style="left:1013.15px;top:282.07px;font-size:13.4px;line-height:17.42px;color:#2a2a2a;font-family:'Liberation Serif',serif;-webkit-text-stroke:0.22px #2a2a2a;">2</div>
<div class="t" style="left:839.30px;top:282.07px;font-size:13.4px;line-height:17.42px;color:#1c1c1c;font-family:'Liberation Serif',serif;font-weight:bold;text-decoration:underline;text-decoration-thickness:1px;text-underline-offset:1.5px;">34</div>
<div class="t" style="left:1177.80px;top:282.07px;font-size:13.4px;line-height:17.42px;color:#1c1c1c;font-family:'Liberation Serif',serif;font-weight:bold;">20</div>
<div class="t" style="left:319.95px;top:297.57px;font-size:13.4px;line-height:17.42px;color:#1c1c1c;font-family:'Liberation Serif',serif;font-weight:bold;">2</div>
<div class="t" style="left:352.20px;top:297.57px;font-size:13.4px;line-height:17.42px;color:#1c1c1c;font-family:'Liberation Serif',serif;font-weight:bold;">Загальнопрофесійн</div>
<div class="t" style="left:352.20px;top:313.12px;font-size:13.4px;line-height:17.42px;color:#1c1c1c;font-family:'Liberation Serif',serif;font-weight:bold;">а підготовка</div>
<svg style="left:352.4px;top:312.0px" width="120" height="4" viewBox="0 0 120 4"><path d="M0 1.6 q0.75 -1.5 1.5 0 q0.75 1.5 1.5 0 q0.75 -1.5 1.5 0 q0.75 1.5 1.5 0 q0.75 -1.5 1.5 0 q0.75 1.5 1.5 0 q0.75 -1.5 1.5 0 q0.75 1.5 1.5 0 q0.75 -1.5 1.5 0 q0.75 1.5 1.5 0 q0.75 -1.5 1.5 0 q0.75 1.5 1.5 0 q0.75 -1.5 1.5 0 q0.75 1.5 1.5 0 q0.75 -1.5 1.5 0 q0.75 1.5 1.5 0 q0.75 -1.5 1.5 0 q0.75 1.5 1.5 0 q0.75 -1.5 1.5 0 q0.75 1.5 1.5 0 q0.75 -1.5 1.5 0 q0.75 1.5 1.5 0 q0.75 -1.5 1.5 0 q0.75 1.5 1.5 0 q0.75 -1.5 1.5 0 q0.75 1.5 1.5 0 q0.75 -1.5 1.5 0 q0.75 1.5 1.5 0 q0.75 -1.5 1.5 0 q0.75 1.5 1.5 0 q0.75 -1.5 1.5 0 q0.75 1.5 1.5 0 q0.75 -1.5 1.5 0 q0.75 1.5 1.5 0 q0.75 -1.5 1.5 0 q0.75 1.5 1.5 0 q0.75 -1.5 1.5 0 q0.75 1.5 1.5 0 q0.75 -1.5 1.5 0 q0.75 1.5 1.5 0 q0.75 -1.5 1.5 0 q0.75 1.5 1.5 0 q0.75 -1.5 1.5 0 q0.75 1.5 1.5 0 q0.75 -1.5 1.5 0 q0.75 1.5 1.5 0 q0.75 -1.5 1.5 0 q0.75 1.5 1.5 0 q0.75 -1.5 1.5 0 q0.75 1.5 1.5 0 q0.75 -1.5 1.5 0 q0.75 1.5 1.5 0 q0.75 -1.5 1.5 0 q0.75 1.5 1.5 0 q0.75 -1.5 1.5 0 q0.75 1.5 1.5 0 q0.75 -1.5 1.5 0 q0.75 1.5 1.5 0 q0.75 -1.5 1.5 0 q0.75 1.5 1.5 0 q0.75 -1.5 1.5 0 q0.75 1.5 1.5 0 q0.75 -1.5 1.5 0 q0.75 1.5 1.5 0 q0.75 -1.5 1.5 0 q0.75 1.5 1.5 0 q0.75 -1.5 1.5 0 q0.75 1.5 1.5 0 q0.75 -1.5 1.5 0 q0.75 1.5 1.5 0 q0.75 -1.5 1.5 0 q0.75 1.5 1.5 0 q0.75 -1.5 1.5 0 q0.75 1.5 1.5 0 q0.75 -1.5 1.5 0 q0.75 1.5 1.5 0 q0.75 -1.5 1.5 0 q0.75 1.5 1.5 0 q0.75 -1.5 1.5 0" fill="none" stroke="#cc4a44" stroke-opacity="0.7" stroke-width="0.6"/></svg>
<svg style="left:352.4px;top:327.6px" width="8" height="4" viewBox="0 0 8 4"><path d="M0 1.6 q0.75 -1.5 1.5 0 q0.75 1.5 1.5 0 q0.75 -1.5 1.5 0 q0.75 1.5 1.5 0" fill="none" stroke="#cc4a44" stroke-opacity="0.7" stroke-width="0.6"/></svg>
<div class="t" style="left:489.30px;top:297.57px;font-size:13.4px;line-height:17.42px;color:#1c1c1c;font-family:'Liberation Serif',serif;font-weight:bold;text-decoration:underline;text-decoration-thickness:1px;text-underline-offset:1.5px;">46</div>
<div class="t" style="left:314.93px;top:329.77px;font-size:13.4px;line-height:17.42px;color:#2a2a2a;font-family:'Liberation Serif',serif;-webkit-text-stroke:0.22px #2a2a2a;">2.1</div>
<div class="t" style="left:352.20px;top:329.77px;font-size:13.4px;line-height:17.42px;color:#2a2a2a;font-family:'Liberation Serif',serif;-webkit-text-stroke:0.22px #2a2a2a;">Інформаційні</div>
<div class="t" style="left:352.20px;top:345.32px;font-size:13.4px;line-height:17.42px;color:#2a2a2a;font-family:'Liberation Serif',serif;-webkit-text-stroke:0.22px #2a2a2a;">технології</div>
<div class="t" style="left:489.30px;top:329.77px;font-size:13.4px;line-height:17.42px;color:#2a2a2a;font-family:'Liberation Serif',serif;-webkit-text-stroke:0.22px #2a2a2a;">8</div>
<div class="t" style="left:604.15px;top:329.77px;font-size:13.4px;line-height:17.42px;color:#2a2a2a;font-family:'Liberation Serif',serif;-webkit-text-stroke:0.22px #2a2a2a;">2</div>
<div class="t" style="left:646.15px;top:329.77px;font-size:13.4px;line-height:17.42px;color:#2a2a2a;font-family:'Liberation Serif',serif;-webkit-text-stroke:0.22px #2a2a2a;">3</div>
<div class="t" style="left:842.65px;top:329.77px;font-size:13.4px;line-height:17.42px;color:#1c1c1c;font-family:'Liberation Serif',serif;font-weight:bold;">8</div>
<div class="t" style="left:314.93px;top:361.27px;font-size:13.4px;line-height:17.42px;color:#2a2a2a;font-family:'Liberation Serif',serif;-webkit-text-stroke:0.22px #2a2a2a;">2.2</div>
<div class="t" style="left:352.20px;top:361.27px;font-size:13.4px;line-height:17.42px;color:#2a2a2a;font-family:'Liberation Serif',serif;-webkit-text-stroke:0.22px #2a2a2a;">Основи трудового</div>
<div class="t" style="left:352.20px;top:376.82px;font-size:13.4px;line-height:17.42px;color:#2a2a2a;font-family:'Liberation Serif',serif;-webkit-text-stroke:0.22px #2a2a2a;">законодавства</div>
<div class="t" style="left:489.30px;top:361.27px;font-size:13.4px;line-height:17.42px;color:#2a2a2a;font-family:'Liberation Serif',serif;-webkit-text-stroke:0.22px #2a2a2a;">8</div>
<div class="t" style="left:604.15px;top:361.27px;font-size:13.4px;line-height:17.42px;color:#2a2a2a;font-family:'Liberation Serif',serif;-webkit-text-stroke:0.22px #2a2a2a;">2</div>
<div class="t" style="left:646.15px;top:361.27px;font-size:13.4px;line-height:17.42px;color:#2a2a2a;font-family:'Liberation Serif',serif;-webkit-text-stroke:0.22px #2a2a2a;">3</div>
<div class="t" style="left:842.65px;top:361.27px;font-size:13.4px;line-height:17.42px;color:#1c1c1c;font-family:'Liberation Serif',serif;font-weight:bold;">8</div>
<div class="t" style="left:314.93px;top:392.57px;font-size:13.4px;line-height:17.42px;color:#2a2a2a;font-family:'Liberation Serif',serif;-webkit-text-stroke:0.22px #2a2a2a;">2.3</div>
<div class="t" style="left:352.20px;top:392.57px;font-size:13.4px;line-height:17.42px;color:#2a2a2a;font-family:'Liberation Serif',serif;-webkit-text-stroke:0.22px #2a2a2a;">Основи галузевої</div>
<div class="t" style="left:352.20px;top:408.12px;font-size:13.4px;line-height:17.42px;color:#2a2a2a;font-family:'Liberation Serif',serif;-webkit-text-stroke:0.22px #2a2a2a;">економіки і</div>
<div class="t" style="left:352.20px;top:423.67px;font-size:13.4px;line-height:17.42px;color:#2a2a2a;font-family:'Liberation Serif',serif;-webkit-text-stroke:0.22px #2a2a2a;">підприємництва</div>
<div class="t" style="left:489.30px;top:392.57px;font-size:13.4px;line-height:17.42px;color:#2a2a2a;font-family:'Liberation Serif',serif;-webkit-text-stroke:0.22px #2a2a2a;">8</div>
<div class="t" style="left:604.15px;top:392.57px;font-size:13.4px;line-height:17.42px;color:#2a2a2a;font-family:'Liberation Serif',serif;-webkit-text-stroke:0.22px #2a2a2a;">2</div>
<div class="t" style="left:646.15px;top:392.57px;font-size:13.4px;line-height:17.42px;color:#2a2a2a;font-family:'Liberation Serif',serif;-webkit-text-stroke:0.22px #2a2a2a;">3</div>
<div class="t" style="left:842.65px;top:392.57px;font-size:13.4px;line-height:17.42px;color:#1c1c1c;font-family:'Liberation Serif',serif;font-weight:bold;">8</div>
<div class="t" style="left:314.93px;top:439.27px;font-size:13.4px;line-height:17.42px;color:#2a2a2a;font-family:'Liberation Serif',serif;-webkit-text-stroke:0.22px #2a2a2a;">2.4</div>
<div class="t" style="left:352.20px;top:439.27px;font-size:13.4px;line-height:17.42px;color:#2a2a2a;font-family:'Liberation Serif',serif;-webkit-text-stroke:0.22px #2a2a2a;">Основи</div>
<div class="t" style="left:352.20px;top:454.82px;font-size:13.4px;line-height:17.42px;color:#2a2a2a;font-family:'Liberation Serif',serif;-webkit-text-stroke:0.22px #2a2a2a;">енергозбереження</div>
<div class="t" style="left:489.30px;top:439.27px;font-size:13.4px;line-height:17.42px;color:#2a2a2a;font-family:'Liberation Serif',serif;-webkit-text-stroke:0.22px #2a2a2a;">6</div>
<div class="t" style="left:604.15px;top:439.27px;font-size:13.4px;line-height:17.42px;color:#2a2a2a;font-family:'Liberation Serif',serif;-webkit-text-stroke:0.22px #2a2a2a;">2</div>
<div class="t" style="left:646.15px;top:439.27px;font-size:13.4px;line-height:17.42px;color:#2a2a2a;font-family:'Liberation Serif',serif;-webkit-text-stroke:0.22px #2a2a2a;">2</div>
<div class="t" style="left:842.65px;top:439.27px;font-size:13.4px;line-height:17.42px;color:#1c1c1c;font-family:'Liberation Serif',serif;font-weight:bold;">6</div>
<div class="t" style="left:314.93px;top:470.27px;font-size:13.4px;line-height:17.42px;color:#2a2a2a;font-family:'Liberation Serif',serif;-webkit-text-stroke:0.22px #2a2a2a;">2.5</div>
<div class="t" style="left:352.20px;top:470.27px;font-size:13.4px;line-height:17.42px;color:#2a2a2a;font-family:'Liberation Serif',serif;-webkit-text-stroke:0.22px #2a2a2a;">Професійна етика та</div>
<div class="t" style="left:352.20px;top:485.82px;font-size:13.4px;line-height:17.42px;color:#2a2a2a;font-family:'Liberation Serif',serif;-webkit-text-stroke:0.22px #2a2a2a;">психологія</div>
<div class="t" style="left:489.30px;top:470.27px;font-size:13.4px;line-height:17.42px;color:#2a2a2a;font-family:'Liberation Serif',serif;-webkit-text-stroke:0.22px #2a2a2a;">8</div>
<div class="t" style="left:604.15px;top:470.27px;font-size:13.4px;line-height:17.42px;color:#2a2a2a;font-family:'Liberation Serif',serif;-webkit-text-stroke:0.22px #2a2a2a;">4</div>
<div class="t" style="left:646.15px;top:470.27px;font-size:13.4px;line-height:17.42px;color:#2a2a2a;font-family:'Liberation Serif',serif;-webkit-text-stroke:0.22px #2a2a2a;">2</div>
<div class="t" style="left:842.65px;top:470.27px;font-size:13.4px;line-height:17.42px;color:#1c1c1c;font-family:'Liberation Serif',serif;font-weight:bold;">8</div>
<div class="t" style="left:314.93px;top:501.57px;font-size:13.4px;line-height:17.42px;color:#2a2a2a;font-family:'Liberation Serif',serif;-webkit-text-stroke:0.22px #2a2a2a;">2.6</div>
<div class="t" style="left:352.20px;top:501.57px;font-size:13.4px;line-height:17.42px;color:#2a2a2a;font-family:'Liberation Serif',serif;-webkit-text-stroke:0.22px #2a2a2a;">Правила дорожнього</div>
<div class="t" style="left:352.20px;top:517.12px;font-size:13.4px;line-height:17.42px;color:#2a2a2a;font-family:'Liberation Serif',serif;-webkit-text-stroke:0.22px #2a2a2a;">руху</div>
<div class="t" style="left:489.30px;top:501.57px;font-size:13.4px;line-height:17.42px;color:#2a2a2a;font-family:'Liberation Serif',serif;-webkit-text-stroke:0.22px #2a2a2a;">8</div>
<div class="t" style="left:604.15px;top:501.57px;font-size:13.4px;line-height:17.42px;color:#2a2a2a;font-family:'Liberation Serif',serif;-webkit-text-stroke:0.22px #2a2a2a;">2</div>
<div class="t" style="left:646.15px;top:501.57px;font-size:13.4px;line-height:17.42px;color:#2a2a2a;font-family:'Liberation Serif',serif;-webkit-text-stroke:0.22px #2a2a2a;">3</div>
<div class="t" style="left:842.65px;top:501.57px;font-size:13.4px;line-height:17.42px;color:#1c1c1c;font-family:'Liberation Serif',serif;font-weight:bold;">8</div>
<div class="t" style="left:319.95px;top:533.27px;font-size:13.4px;line-height:17.42px;color:#1c1c1c;font-family:'Liberation Serif',serif;font-weight:bold;">3</div>
<div class="t" style="left:352.20px;top:533.27px;font-size:13.4px;line-height:17.42px;color:#1c1c1c;font-family:'Liberation Serif',serif;font-weight:bold;">Професійно-</div>
<div class="t" style="left:352.20px;top:548.82px;font-size:13.4px;line-height:17.42px;color:#1c1c1c;font-family:'Liberation Serif',serif;font-weight:bold;">теоретична</div>
<div class="t" style="left:352.20px;top:564.37px;font-size:13.4px;line-height:17.42px;color:#1c1c1c;font-family:'Liberation Serif',serif;font-weight:bold;">підготовка</div>
<div class="t" style="left:489.30px;top:533.27px;font-size:13.4px;line-height:17.42px;color:#2a2a2a;font-family:'Liberation Serif',serif;text-decoration:underline;text-decoration-thickness:1px;text-underline-offset:1.5px;-webkit-text-stroke:0.22px #2a2a2a;">464</div>
<div class="t" style="left:314.93px;top:580.37px;font-size:13.4px;line-height:17.42px;color:#2a2a2a;font-family:'Liberation Serif',serif;-webkit-text-stroke:0.22px #2a2a2a;">3.1</div>
<div class="t" style="left:352.20px;top:580.37px;font-size:13.4px;line-height:17.42px;color:#2a2a2a;font-family:'Liberation Serif',serif;-webkit-text-stroke:0.22px #2a2a2a;">Гігієна та санітарія</div>
<div class="t" style="left:352.20px;top:595.92px;font-size:13.4px;line-height:17.42px;color:#2a2a2a;font-family:'Liberation Serif',serif;-webkit-text-stroke:0.22px #2a2a2a;">виробництва</div>
<div class="t" style="left:489.30px;top:580.37px;font-size:13.4px;line-height:17.42px;color:#2a2a2a;font-family:'Liberation Serif',serif;-webkit-text-stroke:0.22px #2a2a2a;">34</div>
<div class="t" style="left:604.15px;top:580.37px;font-size:13.4px;line-height:17.42px;color:#2a2a2a;font-family:'Liberation Serif',serif;-webkit-text-stroke:0.22px #2a2a2a;">2</div>
<div class="t" style="left:646.65px;top:580.37px;font-size:13.4px;line-height:17.42px;color:#2a2a2a;font-family:'Liberation Serif',serif;-webkit-text-stroke:0.22px #2a2a2a;">2</div>
<div class="t" style="left:693.15px;top:580.37px;font-size:13.4px;line-height:17.42px;color:#2a2a2a;font-family:'Liberation Serif',serif;-webkit-text-stroke:0.22px #2a2a2a;">2</div>
<div class="t" style="left:740.15px;top:580.37px;font-size:13.4px;line-height:17.42px;color:#2a2a2a;font-family:'Liberation Serif',serif;-webkit-text-stroke:0.22px #2a2a2a;">2</div>
<div class="t" style="left:784.65px;top:580.37px;font-size:13.4px;line-height:17.42px;color:#2a2a2a;font-family:'Liberation Serif',serif;-webkit-text-stroke:0.22px #2a2a2a;">2</div>
<div class="t" style="left:839.30px;top:580.37px;font-size:13.4px;line-height:17.42px;color:#1c1c1c;font-family:'Liberation Serif',serif;font-weight:bold;">34</div>
<div class="t" style="left:314.93px;top:611.67px;font-size:13.4px;line-height:17.42px;color:#2a2a2a;font-family:'Liberation Serif',serif;-webkit-text-stroke:0.22px #2a2a2a;">3.2</div>
<div class="t" style="left:352.20px;top:611.67px;font-size:13.4px;line-height:17.42px;color:#2a2a2a;font-family:'Liberation Serif',serif;-webkit-text-stroke:0.22px #2a2a2a;">Фізіологія</div>
<div class="t" style="left:352.20px;top:627.22px;font-size:13.4px;line-height:17.42px;color:#2a2a2a;font-family:'Liberation Serif',serif;-webkit-text-stroke:0.22px #2a2a2a;">харчування</div>
<div class="t" style="left:489.30px;top:611.67px;font-size:13.4px;line-height:17.42px;color:#2a2a2a;font-family:'Liberation Serif',serif;-webkit-text-stroke:0.22px #2a2a2a;">10</div>
<div class="t" style="left:903.15px;top:611.67px;font-size:13.4px;line-height:17.42px;color:#2a2a2a;font-family:'Liberation Serif',serif;-webkit-text-stroke:0.22px #2a2a2a;">1</div>
<div class="t" style="left:955.65px;top:611.67px;font-size:13.4px;line-height:17.42px;color:#2a2a2a;font-family:'Liberation Serif',serif;-webkit-text-stroke:0.22px #2a2a2a;">1</div>
<div class="t" style="left:1013.15px;top:611.67px;font-size:13.4px;line-height:17.42px;color:#2a2a2a;font-family:'Liberation Serif',serif;-webkit-text-stroke:0.22px #2a2a2a;">1</div>
<div class="t" style="left:1177.80px;top:611.67px;font-size:13.4px;line-height:17.42px;color:#1c1c1c;font-family:'Liberation Serif',serif;font-weight:bold;">10</div>
</div>
<div class="abs" style="left:1376.4px;top:174.5px;width:15.6px;height:459.5px;background:#d2d2d2;"></div>
<div class="abs" style="left:1376.4px;top:174.5px;width:14.6px;height:15.5px;background:#fff;"></div>
<div class="abs" style="left:1376.4px;top:346.6px;width:14.6px;height:70px;background:#fff;"></div>
<div class="abs" style="left:1376.4px;top:618.6px;width:14.6px;height:15px;background:#fff;"></div>
<div class="abs" style="left:1391px;top:174.5px;width:1px;height:459.5px;background:#e8e8e8;"></div>
<div class="abs" style="left:208px;top:633.6px;width:1184px;height:16.2px;background:#dad8dc;"></div>
<div class="abs" style="left:208px;top:634.6px;width:1041px;height:14.4px;background:#fff;"></div>
<div class="abs" style="left:1361px;top:634.6px;width:14px;height:14.4px;background:#fff;"></div>
<div class="abs" style="left:1375.6px;top:633.6px;width:16.4px;height:16.2px;background:#e4e4e4;"></div>
<div class="abs" style="left:208px;top:649.8px;width:1184px;height:20.6px;background:#f1f1f1;"></div>
<div class="abs" style="left:1213.2px;top:650.4px;width:27.8px;height:19.4px;background:#c9c9c9;"></div>
<div class="t" style="left:212.00px;top:655.00px;font-size:8.6px;line-height:11.18px;color:#777;letter-spacing:0.402px;">Куда переместить?</div>
<svg style="left:1180px;top:170px" width="220" height="505" viewBox="1180 170 220 505">
<path d="M1380.8999999999999 185.1H1386.3L1383.6 182.1Z" fill="#777"/>
<path d="M1380.6999999999998 624.1999999999999H1386.5L1383.6 627.4Z" fill="#666"/>
<path d="M1366.4 638.4L1369.8 641.8L1366.4 645.2Z" fill="#666"/>
<g fill="none" stroke="#8a8a8a" stroke-width="0.9"><path d="M1193.6 655H1199V664.4H1193.6ZM1200.2 655H1205.6V664.4H1200.2Z"/><path d="M1194.8 657.4H1197.8M1194.8 659.6H1197.8M1194.8 661.8H1197.8M1201.4 657.4H1204.4M1201.4 659.6H1204.4M1201.4 661.8H1204.4" stroke-width="0.7"/></g>
<rect x="1221.4" y="654.4" width="11.4" height="11" fill="none" stroke="#8a8a8a" stroke-width="0.9"/><path d="M1223 657.6H1231.2M1223 660H1231.2M1223 662.4H1231.2" stroke="#9a9a9a" stroke-width="1.3"/>
<rect x="1249.2" y="654.4" width="9.6" height="10" fill="none" stroke="#8a8a8a" stroke-width="0.9"/><path d="M1250.6 657H1257.4M1250.6 659.2H1257.4M1250.6 661.4H1254" stroke="#9a9a9a" stroke-width="0.8"/><circle cx="1258.2" cy="662.6" r="3" fill="#f1f1f1" stroke="#777" stroke-width="1"/><path d="M1256 660.6L1260.4 664.8" stroke="#777" stroke-width="0.8"/>
<path d="M1272.6 660H1279.6" stroke="#666" stroke-width="1.5"/><path d="M1283 660H1374" stroke="#b4b4b4" stroke-width="0.6"/><rect x="1329" y="654.6" width="3.8" height="10.8" rx="0.8" fill="#6e6e6e"/><path d="M1378 660H1386.4M1382.2 655.8V664.2" stroke="#666" stroke-width="1.5"/>
</svg>
<div class="abs" style="left:291.6px;top:174.5px;width:10.6px;height:5px;background:#fff;border:1px solid #b4b4b4;border-top:none;box-sizing:border-box;"></div>
<div class="abs" style="left:296.4px;top:175.4px;width:1px;height:2.6px;background:#999;"></div>
<svg style="left:1074px;top:480px" width="16" height="22" viewBox="0 0 16 22"><path d="M3.2 2.6H12.4M3.2 17.6H12.4M7.8 2.6V17.6" stroke="#111" stroke-width="2.6" fill="none"/></svg>
<div class="abs" style="left:9px;top:615px;width:312px;height:50px;background:rgba(38,38,38,0.555);border-radius:9px;"></div>
<div class="t" style="left:25.80px;top:626.95px;font-size:20px;line-height:26.0px;color:#fff;letter-spacing:1.808px;-webkit-text-stroke:0.3px #fff;">ДНЗ</div>
<div class="t" style="left:77.40px;top:626.95px;font-size:20px;line-height:26.0px;color:#fff;letter-spacing:0.444px;-webkit-text-stroke:0.3px #fff;">ОВПУ</div>
<div class="t" style="left:140.80px;top:626.95px;font-size:20px;line-height:26.0px;color:#fff;letter-spacing:0.485px;-webkit-text-stroke:0.3px #fff;">МТС</div>
<div class="t" style="left:191.20px;top:626.95px;font-size:20px;line-height:26.0px;color:#fff;letter-spacing:1.014px;-webkit-text-stroke:0.3px #fff;">(гость)</div>
<svg style="left:270px;top:630px" width="36" height="20" viewBox="0 0 36 20"><circle cx="8.5" cy="10" r="2.6" fill="#fff"/><circle cx="17.2" cy="10" r="2.6" fill="#fff"/><circle cx="25.8" cy="10" r="2.6" fill="#fff"/></svg>
<div class="abs" style="left:583.5px;top:675px;width:108px;height:108px;background:#282828;border-radius:5px;"></div>
<div class="abs" style="left:694.8px;top:675px;width:108px;height:108px;background:#282828;border-radius:5px;"></div>
<div class="abs" style="left:806.1px;top:675px;width:108px;height:108px;background:#282828;border-radius:5px;"></div>
<div class="abs" style="left:917.4px;top:675px;width:108px;height:108px;background:#282828;border-radius:5px;"></div>
<div class="abs" style="left:1028.7px;top:675px;width:108px;height:108px;background:#282828;border-radius:5px;"></div>
<div class="abs" style="left:1140px;top:675px;width:108px;height:108px;background:#282828;border-radius:5px;"></div>
<div class="abs" style="left:1251.3px;top:675px;width:108px;height:108px;background:#282828;border-radius:5px;"></div>
<div class="abs" style="left:1362.5px;top:675px;width:234px;height:108px;background:#282828;border-radius:5px;"></div>
<div class="abs" style="left:724.7px;top:705.5px;width:47px;height:47px;background:#d9e2f2;border-radius:50%;"></div>
<div class="t" style="left:737.00px;top:717.34px;font-size:18.9px;line-height:24.57px;color:#0f2d5e;letter-spacing:-0.077px;-webkit-text-stroke:0.45px #0f2d5e;">ТК</div>
<div class="abs" style="left:1456px;top:705.7px;width:48.6px;height:48.6px;background:#f9e9c4;border-radius:50%;"></div>
<div class="t" style="left:1465.10px;top:718.71px;font-size:18px;line-height:23.4px;color:#7a5a12;letter-spacing:1.045px;-webkit-text-stroke:0.45px #7a5a12;">БШ</div>
<svg style="left:0;top:670px" width="1600" height="120" viewBox="0 670 1600 120">
<defs><filter id="bl" x="-10%" y="-10%" width="120%" height="120%"><feGaussianBlur stdDeviation="1.3"/></filter><filter id="bl2" x="-10%" y="-10%" width="120%" height="120%"><feGaussianBlur stdDeviation="2.2"/></filter>
<clipPath id="c1"><rect x="583" y="699" width="108.5" height="60"/></clipPath>
<clipPath id="c3"><rect x="805.8" y="699" width="108" height="60"/></clipPath>
<clipPath id="c4"><rect x="917" y="699" width="108" height="60"/></clipPath>
<clipPath id="c5"><rect x="1032.6" y="698.6" width="99.2" height="60.4"/></clipPath>
<clipPath id="c6"><rect x="1139.4" y="674.8" width="107.6" height="108.2"/></clipPath>
<clipPath id="c7"><path d="M1250.6 689H1358V770H1250.6Z"/></clipPath></defs>
<g clip-path="url(#c1)"><g filter="url(#bl)">
<rect x="578" y="694" width="120" height="70" fill="#cbc5b5"/>
<rect x="583" y="699" width="24" height="28" fill="#d6d0c0"/>
<path d="M606 717L640 708V758H606Z" fill="#3a2019"/>
<path d="M604 717L642 706.5V710L604 721Z" fill="#5a3424"/>
<path d="M626 704L646 700V703L626 708Z" fill="#d8d4c8"/>
<rect x="610" y="720" width="29" height="13" fill="#2a447e"/><path d="M612.5 721V732M616 721V732M620 721L627 731M624 721L632 731M629 722L638 730" stroke="#8096c4" stroke-width="1.2"/>
<rect x="608" y="734.5" width="32" height="2.2" fill="#b8a890"/>
<rect x="610" y="738" width="29" height="13" fill="#4e5654"/><path d="M613 738V751M618 738V751M629 738V751M633.5 738V751M637 738V751" stroke="#b4b0a4" stroke-width="1.4"/><path d="M622 738V751M625 738V751" stroke="#7a2a28" stroke-width="1.6"/>
<rect x="641" y="699" width="55" height="62" fill="#6c2519"/><rect x="644" y="703" width="24" height="52" fill="#782c1d"/><rect x="640" y="699" width="2.4" height="62" fill="#4a1a12"/>
<ellipse cx="596" cy="738" rx="8" ry="8" fill="#a4a6a2"/><path d="M583 742Q592 738 602 744V761H583Z" fill="#b9b9c2"/>
<ellipse cx="617" cy="757" rx="13" ry="5.5" fill="#8c2a22"/><rect x="627" y="752" width="14" height="9" fill="#27314f"/>
<path d="M640 761L650 746Q660 738 672 742L696 742V761Z" fill="#474b4c"/>
<path d="M663 733Q662 712 678 710Q694 711 694 730L692 745H666Z" fill="#2a1a1a"/>
<ellipse cx="678" cy="731.5" rx="10.5" ry="12.5" fill="#be988b"/>
<path d="M668 726Q672 724 676 726M681 726Q685 724 689 726" stroke="#5a3a36" stroke-width="1.2" fill="none"/>
<rect x="666" y="745" width="18" height="16" fill="#6c6868"/>
<path d="M679 738Q683 733 690 735Q696 740 694 752L690 760H684Q680 748 679 738Z" fill="#dcc8b8"/>
</g></g>
<g clip-path="url(#c3)"><g filter="url(#bl2)">
<rect x="800" y="694" width="120" height="70" fill="#8b8580"/>
<rect x="858" y="699" width="56" height="52" fill="#a9a19e"/><rect x="872" y="712" width="30" height="26" fill="#b4acab"/><rect x="806" y="699" width="22" height="44" fill="#79736f"/>
<ellipse cx="876" cy="740" rx="10" ry="6" fill="#a898a2"/>
</g><g filter="url(#bl)">
<path d="M829 730Q828 712 846 711Q864 712 864 730Z" fill="#3b2a24"/>
<ellipse cx="847.5" cy="737" rx="16.5" ry="20" fill="#9b6957"/>
<ellipse cx="842" cy="726" rx="6" ry="3" fill="#a87866"/><ellipse cx="855" cy="728" rx="4" ry="4" fill="#a45f52"/>
<path d="M833 733Q838 731 843 733M851 733Q856 731 861 733" stroke="#4a2e28" stroke-width="1.3" fill="none"/>
<path d="M806 751Q813 745 823 752V761H806Z" fill="#4a4768"/>
<path d="M858 761L866 747Q873 752 878 761Z" fill="#2a2523"/>
</g></g>
<g clip-path="url(#c4)"><g filter="url(#bl2)">
<rect x="912" y="694" width="120" height="70" fill="#8e897f"/>
<rect x="917" y="699" width="8" height="60" fill="#6e6b55"/><rect x="968" y="699" width="44" height="5.5" fill="#6c675f"/><rect x="926" y="704" width="40" height="40" fill="#959085"/>
</g><g filter="url(#bl)">
<path d="M965 733Q964 710 982 709Q1000 710 1000 733L1003 756H962Z" fill="#2e2625"/>
<ellipse cx="982.5" cy="734" rx="9.5" ry="12.5" fill="#7c6762"/>
<path d="M930 761V749Q946 741 962 749L1004 747Q1019 750 1026 761Z" fill="#393432"/>
<ellipse cx="943" cy="748" rx="12" ry="4" fill="#2e2a2a"/>
</g></g>
<g clip-path="url(#c5)"><g filter="url(#bl)">
<rect x="1028" y="694" width="110" height="70" fill="#4a3826"/>
<rect x="1032" y="698" width="12.5" height="17" fill="#3a4a9a"/><path d="M1035 699V710M1040 699V706" stroke="#e4e6f2" stroke-width="2.2"/>
<rect x="1094" y="698" width="38" height="28" fill="#262f78"/><rect x="1094" y="712" width="30" height="14" fill="#1e2248"/>
<path d="M1100.5 699.5V706M1106.5 699.5V709M1112.5 700V712M1119.5 700V713M1126 699.5V707" stroke="#e6e8f4" stroke-width="3"/>
<rect x="1123.4" y="698" width="5.2" height="62" fill="#a87c42"/><rect x="1088" y="725.6" width="44" height="3" fill="#b08444"/>
<rect x="1088" y="729" width="36" height="10" fill="#2c2016"/><path d="M1092 729V739M1097 729V739M1102 729V739M1107 729V739M1112 729V739M1117 729V739" stroke="#b48a4a" stroke-width="1.5"/>
<rect x="1032" y="716" width="17" height="22" fill="#3c2c1c"/><path d="M1034 718V738M1038 718V738M1042 718V738M1046 718V738" stroke="#a88448" stroke-width="1.4"/><rect x="1032" y="714.6" width="18" height="2.4" fill="#a8804a"/>
<path d="M1086 738Q1100 734 1116 739L1118 751H1084Z" fill="#9c8c6c"/><circle cx="1094" cy="743" r="2" fill="#5c4a30"/><circle cx="1104" cy="741" r="2" fill="#c8b890"/><circle cx="1110" cy="746" r="2" fill="#5c4a30"/>
<rect x="1032" y="738" width="16" height="22" fill="#c4c4c4"/>
<path d="M1048 716Q1048 700 1066 699Q1088 700 1088 716L1086 722H1050Z" fill="#4a423e"/>
<path d="M1049 716Q1052 706 1068 706Q1084 706 1087 716Q1088 734 1080 742Q1068 750 1058 742Q1048 734 1049 716Z" fill="#c99a8c"/>
<path d="M1062 733Q1068 735.5 1074 733" stroke="#7a4038" stroke-width="1.8" fill="none"/>
<path d="M1040 761Q1042 750 1054 747H1086Q1100 749 1104 761Z" fill="#8c8a88"/>
<path d="M1050 752V742Q1068 750 1084 740V752Q1068 758 1050 752Z" fill="#ece9e4"/>
<rect x="1047" y="710.4" width="19" height="9.4" rx="4" fill="#dcd8da" fill-opacity="0.78"/><rect x="1069" y="710.4" width="20" height="9.4" rx="4" fill="#dcd8da" fill-opacity="0.78"/>
</g></g>
<g clip-path="url(#c6)"><g filter="url(#bl2)">
<rect x="1135" y="670" width="116" height="118" fill="#d6cfc4"/>
<path d="M1139 783V738Q1140 704 1160 690Q1184 678 1206 684Q1236 694 1242 736L1247 765V783Z" fill="#8f887f"/>
<path d="M1143 742Q1146 708 1170 692L1184 690Q1168 716 1160 744Z" fill="#cfc9bb"/>
<path d="M1172 692Q1192 680 1212 690L1222 730Q1204 706 1186 706L1168 728Z" fill="#59534e"/>
<path d="M1210 690Q1234 704 1240 742L1226 744Q1222 716 1206 700Z" fill="#a7a096"/>
<path d="M1232 728Q1243 746 1241 772L1233 781Q1231 750 1223 732Z" fill="#4b4540"/>
<path d="M1150 783V748Q1154 728 1188 726Q1224 728 1230 750V783Z" fill="#c8a696"/>
<path d="M1152 742Q1160 716 1188 712Q1218 714 1228 742L1220 744Q1204 726 1186 728Q1170 730 1158 748Z" fill="#99938a"/>
<ellipse cx="1192" cy="772" rx="30" ry="11" fill="#d2b0a6"/>
<rect x="1139" y="752" width="9" height="31" fill="#4e3e3b"/>
</g><g filter="url(#bl)">
<path d="M1141 739Q1180 745 1230 743" fill="none" stroke="#ece6e0" stroke-width="2.2"/><path d="M1170 745L1172 751" stroke="#e4dcd4" stroke-width="2"/>
<path d="M1160 737Q1170 740 1180 737M1198 737Q1208 740 1220 737" fill="none" stroke="#8a6a60" stroke-width="1.3"/>
</g></g>
<g clip-path="url(#c7)"><g filter="url(#bl2)">
<rect x="1246" y="685" width="116" height="100" fill="#dadad6"/>
<rect x="1246" y="685" width="116" height="8" fill="#b4b4b0"/><rect x="1246" y="685" width="9" height="40" fill="#b0aca6"/><rect x="1350" y="685" width="10" height="30" fill="#bcbcb8"/>
<path d="M1250 696L1262 714L1286 728V783H1250Z" fill="#8f8474"/>
<path d="M1254 700L1262 716M1252 716L1268 730M1252 734L1272 744" stroke="#a6553a" stroke-width="2.2"/><path d="M1254 708L1260 720M1252 726L1270 738M1252 746L1276 756" stroke="#d0c8b8" stroke-width="2.2"/>
<path d="M1268 728L1290 724V740L1268 742Z" fill="#bd6038"/><rect x="1274" y="740" width="18" height="12" fill="#b8b0a4"/>
<rect x="1348" y="716" width="12" height="34" fill="#8c3222"/><rect x="1338" y="738" width="14" height="18" fill="#6a5a50"/>
</g><g filter="url(#bl)">
<path d="M1284 722Q1280 694 1312 691Q1346 692 1346 722Q1346 736 1340 742L1290 742Q1284 736 1284 722Z" fill="#2b2629"/>
<path d="M1295 738Q1296 726 1314 726Q1334 726 1335 740Q1336 756 1326 762H1304Q1294 754 1295 738Z" fill="#bca4a0"/>
<path d="M1298 733Q1306 731 1313 733.5Q1322 731 1333 733" fill="none" stroke="#6e5c5a" stroke-width="1.3"/>
<path d="M1250 783V750Q1258 748 1262 760Q1286 752 1302 760Q1316 768 1330 760Q1346 756 1358 762V783Z" fill="#4c4a48"/>
</g></g>
<path d="M597 747.8H691.5V759H592V752.8Q592 747.8 597 747.8Z" fill="#262626" fill-opacity="0.72"/>
<path d="M821.5 747.6H913.8V759H816.5V752.6Q816.5 747.6 821.5 747.6Z" fill="#343434" fill-opacity="0.74"/>
<path d="M931 747.6H1025V759H926V752.6Q926 747.6 931 747.6Z" fill="#303030" fill-opacity="0.74"/>
<rect x="1148" y="748.4" width="98.6" height="29.2" rx="8" fill="#5a5552" fill-opacity="0.82"/>
<path d="M1266 747.6H1358V770H1261V752.6Q1261 747.6 1266 747.6Z" fill="#2a2826" fill-opacity="0.76"/>
<rect x="1030.3" y="676.7" width="103.8" height="104.4" fill="none" stroke="#7b83eb" stroke-width="3.8"/>
<path d="M1044 747.8H1132V759H1039V752.8Q1039 747.8 1044 747.8Z" fill="#2a2a2a" fill-opacity="0.6"/>
<g transform="translate(785.5 754.5)"><rect x="5" y="1.4" width="5" height="9" rx="2.5" fill="#e8e8e8"/><path d="M2.6 7.6C2.6 10.8 4.6 12.8 7.5 12.8C10.4 12.8 12.4 10.8 12.4 7.6M7.5 13V16" fill="none" stroke="#e8e8e8" stroke-width="1.3"/><path d="M1.6 2L13.8 15.4" stroke="#282828" stroke-width="3.2"/><path d="M1.2 1.6L14.2 15.8" stroke="#e8e8e8" stroke-width="1.4" stroke-linecap="round"/></g>
<g transform="translate(1007.9 754.5)"><rect x="5" y="1.4" width="5" height="9" rx="2.5" fill="#e8e8e8"/><path d="M2.6 7.6C2.6 10.8 4.6 12.8 7.5 12.8C10.4 12.8 12.4 10.8 12.4 7.6M7.5 13V16" fill="none" stroke="#e8e8e8" stroke-width="1.3"/><path d="M1.6 2L13.8 15.4" stroke="#282828" stroke-width="3.2"/><path d="M1.2 1.6L14.2 15.8" stroke="#e8e8e8" stroke-width="1.4" stroke-linecap="round"/></g>
<g transform="translate(1231.5 754.5)"><rect x="5" y="1.4" width="5" height="9" rx="2.5" fill="#e8e8e8"/><path d="M2.6 7.6C2.6 10.8 4.6 12.8 7.5 12.8C10.4 12.8 12.4 10.8 12.4 7.6M7.5 13V16" fill="none" stroke="#e8e8e8" stroke-width="1.3"/><path d="M1.6 2L13.8 15.4" stroke="#282828" stroke-width="3.2"/><path d="M1.2 1.6L14.2 15.8" stroke="#e8e8e8" stroke-width="1.4" stroke-linecap="round"/></g>
</svg>
<div class="t" style="left:594.70px;top:751.50px;font-size:19.6px;line-height:25.48px;color:#fff;letter-spacing:-0.047px;-webkit-text-stroke:0.3px #fff;">ДНЗ ОВ…</div>
<div class="t" style="left:706.90px;top:751.50px;font-size:19.6px;line-height:25.48px;color:#fff;letter-spacing:-0.620px;-webkit-text-stroke:0.3px #fff;">ТАТЬ…</div>
<div class="t" style="left:817.70px;top:751.50px;font-size:19.6px;line-height:25.48px;color:#fff;letter-spacing:-0.437px;-webkit-text-stroke:0.3px #fff;">Олена Б…</div>
<div class="t" style="left:928.60px;top:751.50px;font-size:19.6px;line-height:25.48px;color:#fff;letter-spacing:-0.123px;-webkit-text-stroke:0.3px #fff;">Тетян…</div>
<div class="t" style="left:1040.00px;top:751.50px;font-size:19.6px;line-height:25.48px;color:#fff;letter-spacing:-0.070px;-webkit-text-stroke:0.3px #fff;">Янченк…</div>
<div class="t" style="left:1151.30px;top:751.50px;font-size:19.6px;line-height:25.48px;color:#fff;letter-spacing:-0.076px;-webkit-text-stroke:0.3px #fff;">Ізмаї…</div>
<div class="t" style="left:1262.40px;top:751.50px;font-size:19.6px;line-height:25.48px;color:#fff;letter-spacing:-0.016px;-webkit-text-stroke:0.3px #fff;">Світлан…</div>
<div class="abs" style="left:0px;top:786.8px;width:1600px;height:105.2px;background:#303030;"></div>
<div class="abs" style="left:0px;top:892px;width:1600px;height:68px;background:#000;"></div>
<div class="abs" style="left:799.6px;top:803px;width:2.8px;height:72.6px;background:#9c9c9c;"></div>
<div class="abs" style="left:1188px;top:797.5px;width:84.3px;height:84px;background:#a21b3c;border-radius:8px;"></div>
<svg style="left:0;top:787px" width="1600" height="173" viewBox="0 787 1600 173">
<g fill="none" stroke="#fff" stroke-width="2.5" stroke-linecap="round" stroke-linejoin="round">
<path d="M355.4 854.4L357.6 846.8A14.6 14.6 0 1 1 363 852.4Z"/><path d="M364.8 836H375M364.8 842.4H371"/>
<circle cx="459.2" cy="831.6" r="6.5"/><circle cx="473.8" cy="833" r="5.1"/>
<path d="M452.2 844.2H466.2Q468.4 844.2 468.4 846.4V847.2C468.4 852 464.6 854.8 459.2 854.8C453.8 854.8 450 852 450 847.2V846.4Q450 844.2 452.2 844.2Z"/>
<path d="M473.6 844.2H478.8Q481 844.2 481 846.4V847C481 851 478 853.2 473 853"/>
<rect x="544.4" y="828" width="31.8" height="23" rx="2.6"/><path d="M560.3 845.4V834.2M555.6 838.6L560.3 833.8L565 838.6"/>
<rect x="736.7" y="825.7" width="10.7" height="10.6" rx="2.2"/>
<rect x="736.7" y="842.7" width="10.7" height="10.6" rx="2.2"/>
<rect x="753.8" y="825.7" width="10.7" height="10.6" rx="2.2"/>
<rect x="753.8" y="842.7" width="10.7" height="10.6" rx="2.2"/>
<circle cx="661" cy="844.6" r="10" stroke-width="2.3"/><path d="M656 847.6Q660.6 852 665.2 847.6" stroke-width="1.9"/>
</g>
<circle cx="657.2" cy="842.8" r="1.45" fill="#fff"/><circle cx="664.2" cy="842.8" r="1.45" fill="#fff"/>
<path d="M640.7 838V829.2Q640.7 827.6 642.2 827.6Q643.7 827.6 643.7 829.2V825.4Q643.7 823.8 645.3 823.8Q646.9 823.8 646.9 825.4V824.2Q646.9 822.6 648.5 822.6Q650.1 822.6 650.1 824.2V825.4Q650.1 823.8 651.7 823.8Q653.3 823.8 653.3 825.4V835L655.9 832Q657.3 830.6 658.7 831.7Q659.9 832.9 658.9 834.5L653.7 841.7Q651.5 844.5 647.5 844.5Q640.7 844.1 640.7 838Z" fill="#303030" stroke="#303030" stroke-width="5.6" stroke-linejoin="round"/>
<path d="M640.7 838V829.2Q640.7 827.6 642.2 827.6Q643.7 827.6 643.7 829.2V825.4Q643.7 823.8 645.3 823.8Q646.9 823.8 646.9 825.4V824.2Q646.9 822.6 648.5 822.6Q650.1 822.6 650.1 824.2V825.4Q650.1 823.8 651.7 823.8Q653.3 823.8 653.3 825.4V835L655.9 832Q657.3 830.6 658.7 831.7Q659.9 832.9 658.9 834.5L653.7 841.7Q651.5 844.5 647.5 844.5Q640.7 844.1 640.7 838Z" fill="#303030" stroke="#fff" stroke-width="2.3" stroke-linejoin="round"/>
<path d="M643.7 829V834.6M646.9 825.6V834M650.1 825.6V834" stroke="#fff" stroke-width="2" stroke-linecap="round"/>
<path d="M836 827.6H850.8Q854.8 827.6 854.8 831.6V848Q854.8 852 850.8 852H836Q832 852 832 848V831.6Q832 827.6 836 827.6Z" fill="#fff"/><path d="M857 837.2L863 831.2Q865.4 829.4 865.4 832.4V847.2Q865.4 850.2 863 848.4L857 842.4Z" fill="#fff"/>
<path d="M834.4 822.4L867 855" stroke="#303030" stroke-width="3.2"/><path d="M832.8 822.8L866 856" stroke="#fff" stroke-width="2.3" stroke-linecap="round"/>
<rect x="937.6" y="822.8" width="13" height="23.4" rx="6.5" fill="#fff"/><path d="M934 838.4C934 845 938 849 944.2 849C950.4 849 954.4 845 954.4 838.4M944.2 849.2V855.6" fill="none" stroke="#fff" stroke-width="2.2" stroke-linecap="round"/>
<path d="M930.4 822.6L962.4 855.6" stroke="#303030" stroke-width="3.2"/><path d="M928.8 823L960.6 856" stroke="#fff" stroke-width="2.3" stroke-linecap="round"/>
<path d="M1024.8 832.6H1031.4L1042 825.6Q1044.8 824 1044.8 827V852.6Q1044.8 855.6 1042 854L1031.4 846.4H1024.8Q1022.8 846.4 1022.8 844.4V834.6Q1022.8 832.6 1024.8 832.6Z" fill="#fff"/>
<path d="M1048.6 833.6Q1051.4 839.6 1048.6 845.6M1052.6 829Q1058 839.6 1052.6 850.2" fill="none" stroke="#fff" stroke-width="2.3" stroke-linecap="round"/>
<circle cx="1123.4" cy="839.4" r="3.45" fill="#fff"/>
<circle cx="1134.7" cy="839.4" r="3.45" fill="#fff"/>
<circle cx="1146" cy="839.4" r="3.45" fill="#fff"/>
<path d="M1213 842C1213 838.4 1214.8 836.2 1218 834.8C1225.8 831.4 1234.2 831.4 1242 834.8C1245.2 836.2 1247 838.4 1247 842V844.4Q1247 847 1244.4 846.8L1237.4 846.2Q1234.8 845.8 1234.6 843.4L1234.4 841Q1234.2 839.6 1232.8 839.5Q1230 839.2 1227.2 839.5Q1225.8 839.6 1225.6 841L1225.4 843.4Q1225.2 845.8 1222.6 846.2L1215.6 846.8Q1213 847 1213 844.4Z" fill="#fff"/>
<path d="M440.4 917V938.6M450 917V938.6M459.6 917V938.6" stroke="#9a9a9a" stroke-width="2.6"/>
<rect x="790.8" y="917" width="21.6" height="21" rx="6.4" fill="none" stroke="#9a9a9a" stroke-width="2.8"/>
<path d="M1159.6 917.6L1148 928.4L1159.6 939.2" fill="none" stroke="#9a9a9a" stroke-width="2.6"/>
<circle cx="1463.1" cy="919.4" r="3.2" fill="#a9a9a9"/><path d="M1454 926.3H1472.4" stroke="#a9a9a9" stroke-width="3.4" stroke-linecap="round"/><path d="M1459.4 926H1466.8L1467.4 932L1470 941.2Q1470.2 942.8 1468.6 943Q1467 943.2 1466.6 941.8L1463.1 933.6L1459.6 941.8Q1459.2 943.2 1457.6 943Q1456 942.8 1456.2 941.2L1458.8 932Z" fill="#a9a9a9"/>
</svg>

</body></html>
